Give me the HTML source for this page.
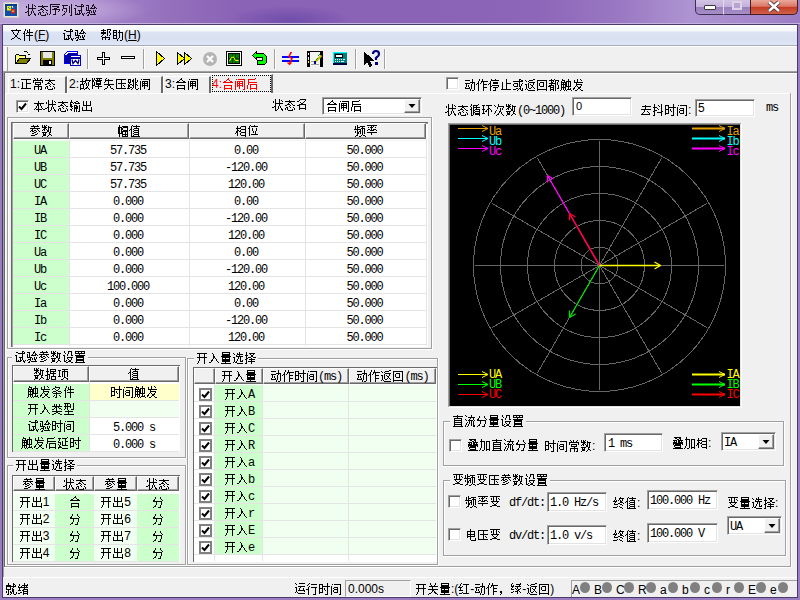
<!DOCTYPE html>
<html><head><meta charset="utf-8">
<style>
*{margin:0;padding:0;box-sizing:border-box}
html,body{width:800px;height:600px;overflow:hidden}
body{position:relative;background:#9a7cc0;font-family:"Liberation Sans",sans-serif;font-size:12px;color:#000;line-height:13px}
.a{position:absolute}
.m{font-family:"Liberation Mono",monospace;font-size:12px;letter-spacing:-1.2px}
.t{white-space:nowrap}
svg{overflow:visible}
.g{display:inline-block;width:12px;height:13px;vertical-align:top;fill:currentColor}
</style></head><body>
<svg width="0" height="0" style="position:absolute"><defs><path id="g0" d="M3 0h1v1h-1zM7 0h1v1h-1zM3 1h1v1h-1zM7 1h1v1h-1zM9 1h1v1h-1zM1 2h1v1h-1zM3 2h1v1h-1zM7 2h1v1h-1zM10 2h1v1h-1zM1 3h1v1h-1zM3 3h1v1h-1zM7 3h1v1h-1zM3 4h8v1h-8zM3 5h1v1h-1zM7 5h1v1h-1zM3 6h1v1h-1zM7 6h1v1h-1zM2 7h2v1h-2zM6 7h1v1h-1zM8 7h1v1h-1zM0 8h2v1h-2zM3 8h1v1h-1zM6 8h1v1h-1zM8 8h1v1h-1zM3 9h1v1h-1zM6 9h1v1h-1zM9 9h1v1h-1zM3 10h1v1h-1zM5 10h1v1h-1zM9 10h2v1h-2zM3 11h2v1h-2zM10 11h1v1h-1z" shape-rendering="crispEdges"/><path id="g1" d="M5 1h1v1h-1zM1 2h10v1h-10zM5 3h2v1h-2zM4 4h1v1h-1zM7 4h1v1h-1zM3 5h3v1h-3zM8 5h1v1h-1zM1 6h2v1h-2zM6 6h1v1h-1zM9 6h2v1h-2zM5 7h1v1h-1zM2 8h2v1h-2zM6 8h1v1h-1zM9 8h1v1h-1zM1 9h1v1h-1zM3 9h1v1h-1zM10 9h1v1h-1zM1 10h1v1h-1zM3 10h1v1h-1zM8 10h1v1h-1zM10 10h1v1h-1zM4 11h5v1h-5z" shape-rendering="crispEdges"/><path id="g2" d="M1 0h10v1h-10zM1 1h1v1h-1zM1 2h1v1h-1zM3 2h7v1h-7zM1 3h1v1h-1zM8 3h2v1h-2zM1 4h1v1h-1zM5 4h3v1h-3zM1 5h1v1h-1zM3 5h8v1h-8zM1 6h1v1h-1zM6 6h1v1h-1zM10 6h1v1h-1zM1 7h1v1h-1zM6 7h1v1h-1zM9 7h1v1h-1zM1 8h1v1h-1zM6 8h1v1h-1zM1 9h1v1h-1zM6 9h1v1h-1zM0 10h1v1h-1zM4 10h3v1h-3z" shape-rendering="crispEdges"/><path id="g3" d="M10 0h1v1h-1zM1 1h6v1h-6zM10 1h1v1h-1zM2 2h1v1h-1zM8 2h1v1h-1zM10 2h1v1h-1zM2 3h1v1h-1zM8 3h1v1h-1zM10 3h1v1h-1zM2 4h4v1h-4zM8 4h1v1h-1zM10 4h1v1h-1zM1 5h1v1h-1zM5 5h1v1h-1zM8 5h1v1h-1zM10 5h1v1h-1zM1 6h1v1h-1zM5 6h1v1h-1zM8 6h1v1h-1zM10 6h1v1h-1zM3 7h1v1h-1zM5 7h1v1h-1zM8 7h1v1h-1zM10 7h1v1h-1zM4 8h1v1h-1zM8 8h1v1h-1zM10 8h1v1h-1zM3 9h1v1h-1zM10 9h1v1h-1zM2 10h2v1h-2zM10 10h1v1h-1zM1 11h1v1h-1zM9 11h2v1h-2z" shape-rendering="crispEdges"/><path id="g4" d="M8 0h2v1h-2zM2 1h2v1h-2zM8 1h1v1h-1zM10 1h1v1h-1zM4 2h7v1h-7zM8 3h1v1h-1zM1 4h2v1h-2zM8 4h1v1h-1zM2 5h1v1h-1zM8 5h1v1h-1zM2 6h1v1h-1zM5 6h4v1h-4zM2 7h1v1h-1zM6 7h1v1h-1zM8 7h1v1h-1zM2 8h1v1h-1zM6 8h1v1h-1zM8 8h1v1h-1zM2 9h1v1h-1zM4 9h1v1h-1zM6 9h2v1h-2zM9 9h1v1h-1zM11 9h1v1h-1zM2 10h5v1h-5zM9 10h2v1h-2zM10 11h1v1h-1z" shape-rendering="crispEdges"/><path id="g5" d="M8 0h1v1h-1zM1 1h3v1h-3zM7 1h2v1h-2zM3 2h1v1h-1zM7 2h1v1h-1zM9 2h1v1h-1zM1 3h1v1h-1zM3 3h1v1h-1zM6 3h1v1h-1zM9 3h2v1h-2zM1 4h1v1h-1zM3 4h1v1h-1zM5 4h5v1h-5zM11 4h1v1h-1zM1 5h1v1h-1zM3 5h1v1h-1zM1 6h5v1h-5zM8 6h1v1h-1zM10 6h1v1h-1zM4 7h1v1h-1zM6 7h1v1h-1zM8 7h1v1h-1zM10 7h1v1h-1zM2 8h3v1h-3zM6 8h1v1h-1zM8 8h2v1h-2zM1 9h1v1h-1zM4 9h1v1h-1zM9 9h1v1h-1zM3 10h1v1h-1zM5 10h6v1h-6zM2 11h2v1h-2z" shape-rendering="crispEdges"/><path id="g6" d="M6 0h1v1h-1zM1 1h10v1h-10zM2 2h1v1h-1zM8 2h1v1h-1zM3 3h1v1h-1zM8 3h1v1h-1zM3 4h1v1h-1zM7 4h1v1h-1zM4 5h1v1h-1zM7 5h1v1h-1zM5 6h2v1h-2zM5 7h2v1h-2zM4 8h1v1h-1zM7 8h1v1h-1zM2 9h2v1h-2zM8 9h2v1h-2zM1 10h1v1h-1zM10 10h1v1h-1z" shape-rendering="crispEdges"/><path id="g7" d="M3 0h1v1h-1zM7 0h1v1h-1zM3 1h1v1h-1zM5 1h1v1h-1zM7 1h1v1h-1zM2 2h1v1h-1zM5 2h1v1h-1zM7 2h1v1h-1zM2 3h1v1h-1zM5 3h6v1h-6zM1 4h2v1h-2zM4 4h1v1h-1zM7 4h1v1h-1zM2 5h1v1h-1zM7 5h1v1h-1zM2 6h1v1h-1zM4 6h7v1h-7zM2 7h1v1h-1zM7 7h1v1h-1zM2 8h1v1h-1zM7 8h1v1h-1zM2 9h1v1h-1zM7 9h1v1h-1zM2 10h1v1h-1zM7 10h1v1h-1zM2 11h1v1h-1zM7 11h1v1h-1z" shape-rendering="crispEdges"/><path id="g8" d="M3 0h1v1h-1zM7 0h4v1h-4zM1 1h5v1h-5zM7 1h1v1h-1zM10 1h1v1h-1zM3 2h1v1h-1zM7 2h1v1h-1zM9 2h1v1h-1zM1 3h5v1h-5zM7 3h1v1h-1zM9 3h1v1h-1zM1 4h5v1h-5zM7 4h1v1h-1zM10 4h1v1h-1zM3 5h1v1h-1zM7 5h1v1h-1zM10 5h1v1h-1zM2 6h1v1h-1zM7 6h1v1h-1zM9 6h1v1h-1zM1 7h1v1h-1zM5 7h1v1h-1zM2 8h8v1h-8zM2 9h1v1h-1zM5 9h1v1h-1zM9 9h1v1h-1zM2 10h1v1h-1zM5 10h1v1h-1zM8 10h2v1h-2z" shape-rendering="crispEdges"/><path id="g9" d="M1 1h4v1h-4zM7 1h1v1h-1zM1 2h1v1h-1zM4 2h1v1h-1zM7 2h1v1h-1zM1 3h4v1h-4zM6 3h5v1h-5zM1 4h1v1h-1zM4 4h1v1h-1zM7 4h1v1h-1zM10 4h1v1h-1zM1 5h1v1h-1zM4 5h1v1h-1zM7 5h1v1h-1zM10 5h1v1h-1zM1 6h4v1h-4zM7 6h1v1h-1zM10 6h1v1h-1zM1 7h1v1h-1zM4 7h1v1h-1zM7 7h1v1h-1zM10 7h1v1h-1zM1 8h1v1h-1zM4 8h1v1h-1zM7 8h1v1h-1zM10 8h1v1h-1zM1 9h4v1h-4zM6 9h1v1h-1zM10 9h1v1h-1zM5 10h1v1h-1zM10 10h1v1h-1zM5 11h1v1h-1zM8 11h2v1h-2z" shape-rendering="crispEdges"/><path id="g10" d="M1 1h10v1h-10zM6 2h1v1h-1zM6 3h1v1h-1zM2 4h1v1h-1zM6 4h1v1h-1zM2 5h1v1h-1zM6 5h5v1h-5zM2 6h1v1h-1zM6 6h1v1h-1zM2 7h1v1h-1zM6 7h1v1h-1zM2 8h1v1h-1zM6 8h1v1h-1zM2 9h1v1h-1zM6 9h1v1h-1zM1 10h10v1h-10z" shape-rendering="crispEdges"/><path id="g11" d="M2 0h1v1h-1zM5 0h1v1h-1zM9 0h1v1h-1zM3 1h1v1h-1zM5 1h1v1h-1zM8 1h1v1h-1zM1 2h10v1h-10zM1 3h1v1h-1zM10 3h1v1h-1zM1 4h1v1h-1zM3 4h6v1h-6zM10 4h1v1h-1zM3 5h1v1h-1zM8 5h1v1h-1zM3 6h6v1h-6zM6 7h1v1h-1zM2 8h8v1h-8zM2 9h1v1h-1zM6 9h1v1h-1zM9 9h1v1h-1zM2 10h1v1h-1zM6 10h1v1h-1zM9 10h1v1h-1zM2 11h1v1h-1zM6 11h1v1h-1zM8 11h2v1h-2z" shape-rendering="crispEdges"/><path id="g12" d="M3 0h1v1h-1zM7 0h1v1h-1zM3 1h1v1h-1zM7 1h1v1h-1zM3 2h1v1h-1zM6 2h6v1h-6zM1 3h6v1h-6zM10 3h1v1h-1zM3 4h1v1h-1zM6 4h1v1h-1zM9 4h1v1h-1zM3 5h1v1h-1zM5 5h1v1h-1zM7 5h1v1h-1zM9 5h1v1h-1zM1 6h4v1h-4zM7 6h1v1h-1zM9 6h1v1h-1zM1 7h1v1h-1zM4 7h1v1h-1zM7 7h1v1h-1zM9 7h1v1h-1zM1 8h1v1h-1zM4 8h1v1h-1zM8 8h1v1h-1zM1 9h1v1h-1zM4 9h1v1h-1zM7 9h2v1h-2zM1 10h4v1h-4zM6 10h2v1h-2zM9 10h1v1h-1zM1 11h1v1h-1zM5 11h1v1h-1zM10 11h1v1h-1z" shape-rendering="crispEdges"/><path id="g13" d="M1 0h1v1h-1zM3 0h1v1h-1zM5 0h6v1h-6zM1 1h1v1h-1zM3 1h1v1h-1zM6 1h1v1h-1zM8 1h1v1h-1zM1 2h2v1h-2zM4 2h7v1h-7zM1 3h2v1h-2zM5 3h5v1h-5zM1 4h1v1h-1zM3 4h1v1h-1zM5 4h1v1h-1zM9 4h1v1h-1zM1 5h1v1h-1zM3 5h1v1h-1zM5 5h5v1h-5zM1 6h1v1h-1zM3 6h1v1h-1zM5 6h5v1h-5zM1 7h3v1h-3zM7 7h1v1h-1zM1 8h1v1h-1zM4 8h7v1h-7zM1 9h1v1h-1zM7 9h1v1h-1zM1 10h1v1h-1zM7 10h1v1h-1z" shape-rendering="crispEdges"/><path id="g14" d="M3 0h1v1h-1zM2 1h1v1h-1zM5 1h1v1h-1zM2 2h8v1h-8zM2 3h1v1h-1zM5 3h1v1h-1zM1 4h1v1h-1zM5 4h1v1h-1zM5 5h1v1h-1zM1 6h10v1h-10zM5 7h2v1h-2zM4 8h1v1h-1zM7 8h1v1h-1zM4 9h1v1h-1zM7 9h1v1h-1zM2 10h2v1h-2zM8 10h2v1h-2zM1 11h1v1h-1zM10 11h1v1h-1z" shape-rendering="crispEdges"/><path id="g15" d="M1 1h10v1h-10zM1 2h1v1h-1zM6 2h1v1h-1zM1 3h1v1h-1zM6 3h1v1h-1zM1 4h1v1h-1zM6 4h1v1h-1zM1 5h1v1h-1zM3 5h8v1h-8zM1 6h1v1h-1zM6 6h1v1h-1zM1 7h1v1h-1zM6 7h1v1h-1zM8 7h1v1h-1zM1 8h1v1h-1zM6 8h1v1h-1zM9 8h1v1h-1zM1 9h1v1h-1zM6 9h1v1h-1zM1 10h10v1h-10z" shape-rendering="crispEdges"/><path id="g16" d="M8 0h1v1h-1zM1 1h3v1h-3zM6 1h1v1h-1zM8 1h1v1h-1zM1 2h1v1h-1zM3 2h1v1h-1zM5 2h2v1h-2zM8 2h1v1h-1zM10 2h1v1h-1zM1 3h1v1h-1zM3 3h1v1h-1zM5 3h2v1h-2zM8 3h1v1h-1zM10 3h1v1h-1zM1 4h3v1h-3zM6 4h1v1h-1zM8 4h2v1h-2zM2 5h1v1h-1zM6 5h1v1h-1zM8 5h1v1h-1zM1 6h1v1h-1zM3 6h2v1h-2zM6 6h1v1h-1zM8 6h2v1h-2zM1 7h2v1h-2zM5 7h2v1h-2zM8 7h1v1h-1zM10 7h1v1h-1zM1 8h2v1h-2zM6 8h1v1h-1zM8 8h1v1h-1zM1 9h1v1h-1zM3 9h2v1h-2zM6 9h1v1h-1zM8 9h1v1h-1zM0 10h3v1h-3zM5 10h1v1h-1zM8 10h1v1h-1zM11 10h1v1h-1zM4 11h1v1h-1zM9 11h2v1h-2z" shape-rendering="crispEdges"/><path id="g17" d="M2 1h1v1h-1zM4 1h7v1h-7zM10 2h1v1h-1zM1 3h1v1h-1zM3 3h6v1h-6zM10 3h1v1h-1zM1 4h1v1h-1zM3 4h1v1h-1zM5 4h1v1h-1zM8 4h1v1h-1zM10 4h1v1h-1zM1 5h1v1h-1zM3 5h6v1h-6zM10 5h1v1h-1zM1 6h1v1h-1zM3 6h1v1h-1zM5 6h1v1h-1zM8 6h1v1h-1zM10 6h1v1h-1zM1 7h1v1h-1zM3 7h6v1h-6zM10 7h1v1h-1zM1 8h1v1h-1zM3 8h1v1h-1zM5 8h1v1h-1zM8 8h1v1h-1zM10 8h1v1h-1zM1 9h1v1h-1zM5 9h1v1h-1zM10 9h1v1h-1zM1 10h1v1h-1zM5 10h1v1h-1zM10 10h1v1h-1zM1 11h1v1h-1zM9 11h2v1h-2z" shape-rendering="crispEdges"/><path id="g18" d="M6 0h1v1h-1zM5 1h2v1h-2zM4 2h1v1h-1zM7 2h1v1h-1zM2 3h2v1h-2zM8 3h2v1h-2zM1 4h10v1h-10zM2 7h8v1h-8zM2 8h1v1h-1zM9 8h1v1h-1zM2 9h1v1h-1zM9 9h1v1h-1zM2 10h8v1h-8zM2 11h1v1h-1zM9 11h1v1h-1z" shape-rendering="crispEdges"/><path id="g19" d="M9 0h1v1h-1zM2 1h7v1h-7zM2 2h1v1h-1zM2 3h1v1h-1zM2 4h9v1h-9zM2 5h1v1h-1zM2 6h1v1h-1zM4 6h7v1h-7zM1 7h1v1h-1zM4 7h1v1h-1zM10 7h1v1h-1zM1 8h1v1h-1zM4 8h1v1h-1zM10 8h1v1h-1zM1 9h1v1h-1zM4 9h1v1h-1zM10 9h1v1h-1zM1 10h1v1h-1zM4 10h7v1h-7zM4 11h1v1h-1zM10 11h1v1h-1z" shape-rendering="crispEdges"/><path id="g20" d="M5 1h1v1h-1zM5 2h1v1h-1zM1 3h10v1h-10zM4 4h2v1h-2zM7 4h1v1h-1zM4 5h2v1h-2zM7 5h1v1h-1zM3 6h1v1h-1zM5 6h1v1h-1zM8 6h1v1h-1zM3 7h1v1h-1zM5 7h1v1h-1zM8 7h1v1h-1zM2 8h1v1h-1zM5 8h1v1h-1zM9 8h1v1h-1zM1 9h1v1h-1zM3 9h6v1h-6zM10 9h2v1h-2zM5 10h1v1h-1zM5 11h1v1h-1z" shape-rendering="crispEdges"/><path id="g21" d="M2 0h1v1h-1zM2 1h1v1h-1zM7 1h2v1h-2zM1 2h3v1h-3zM5 2h2v1h-2zM9 2h1v1h-1zM1 3h1v1h-1zM4 3h1v1h-1zM6 3h5v1h-5zM1 4h2v1h-2zM1 5h2v1h-2zM5 5h3v1h-3zM10 5h1v1h-1zM1 6h3v1h-3zM5 6h1v1h-1zM7 6h2v1h-2zM10 6h1v1h-1zM2 7h1v1h-1zM5 7h4v1h-4zM10 7h1v1h-1zM3 8h1v1h-1zM5 8h4v1h-4zM10 8h1v1h-1zM1 9h2v1h-2zM5 9h1v1h-1zM7 9h1v1h-1zM10 9h1v1h-1zM2 10h1v1h-1zM5 10h1v1h-1zM7 10h1v1h-1zM10 10h1v1h-1zM5 11h1v1h-1zM7 11h1v1h-1zM9 11h2v1h-2z" shape-rendering="crispEdges"/><path id="g22" d="M2 1h1v1h-1zM5 1h1v1h-1zM9 1h1v1h-1zM2 2h1v1h-1zM5 2h1v1h-1zM9 2h1v1h-1zM2 3h1v1h-1zM5 3h1v1h-1zM9 3h1v1h-1zM2 4h1v1h-1zM5 4h1v1h-1zM9 4h1v1h-1zM2 5h8v1h-8zM5 6h1v1h-1zM1 7h1v1h-1zM5 7h1v1h-1zM10 7h1v1h-1zM1 8h1v1h-1zM5 8h1v1h-1zM10 8h1v1h-1zM1 9h1v1h-1zM5 9h1v1h-1zM10 9h1v1h-1zM1 10h10v1h-10zM10 11h1v1h-1z" shape-rendering="crispEdges"/><path id="g23" d="M4 0h6v1h-6zM3 1h1v1h-1zM9 1h1v1h-1zM1 2h2v1h-2zM8 2h1v1h-1zM4 3h1v1h-1zM7 3h1v1h-1zM5 4h2v1h-2zM3 5h7v1h-7zM1 6h3v1h-3zM9 6h1v1h-1zM3 7h1v1h-1zM9 7h1v1h-1zM3 8h1v1h-1zM9 8h1v1h-1zM3 9h7v1h-7zM3 10h1v1h-1zM9 10h1v1h-1z" shape-rendering="crispEdges"/><path id="g24" d="M4 0h1v1h-1zM8 0h1v1h-1zM2 1h8v1h-8zM5 2h1v1h-1zM1 3h10v1h-10zM3 4h1v1h-1zM8 4h1v1h-1zM2 5h2v1h-2zM5 5h2v1h-2zM9 5h1v1h-1zM1 6h1v1h-1zM3 6h2v1h-2zM7 6h1v1h-1zM10 6h1v1h-1zM5 7h2v1h-2zM3 8h2v1h-2zM8 8h1v1h-1zM6 9h2v1h-2zM2 10h4v1h-4z" shape-rendering="crispEdges"/><path id="g25" d="M1 0h1v1h-1zM3 0h1v1h-1zM5 0h1v1h-1zM1 1h1v1h-1zM3 1h2v1h-2zM7 1h1v1h-1zM1 2h5v1h-5zM7 2h4v1h-4zM3 3h2v1h-2zM7 3h1v1h-1zM9 3h1v1h-1zM2 4h2v1h-2zM5 4h1v1h-1zM7 4h1v1h-1zM9 4h1v1h-1zM1 5h1v1h-1zM3 5h1v1h-1zM6 5h2v1h-2zM9 5h1v1h-1zM6 6h2v1h-2zM9 6h1v1h-1zM1 7h5v1h-5zM8 7h2v1h-2zM2 8h1v1h-1zM4 8h1v1h-1zM8 8h1v1h-1zM2 9h3v1h-3zM8 9h2v1h-2zM2 10h3v1h-3zM7 10h1v1h-1zM10 10h1v1h-1zM1 11h1v1h-1zM6 11h1v1h-1z" shape-rendering="crispEdges"/><path id="g26" d="M2 0h1v1h-1zM2 1h1v1h-1zM5 1h6v1h-6zM1 2h4v1h-4zM6 2h5v1h-5zM1 3h2v1h-2zM4 3h2v1h-2zM10 3h1v1h-1zM1 4h2v1h-2zM4 4h2v1h-2zM10 4h1v1h-1zM1 5h2v1h-2zM4 5h1v1h-1zM6 5h5v1h-5zM1 6h2v1h-2zM4 6h7v1h-7zM1 7h2v1h-2zM4 7h2v1h-2zM8 7h1v1h-1zM10 7h1v1h-1zM1 8h5v1h-5zM8 8h1v1h-1zM10 8h1v1h-1zM2 9h1v1h-1zM5 9h6v1h-6zM2 10h1v1h-1zM5 10h1v1h-1zM8 10h1v1h-1zM10 10h1v1h-1zM2 11h1v1h-1zM5 11h6v1h-6z" shape-rendering="crispEdges"/><path id="g27" d="M3 0h1v1h-1zM7 0h1v1h-1zM2 1h1v1h-1zM4 1h7v1h-7zM2 2h1v1h-1zM7 2h1v1h-1zM2 3h1v1h-1zM5 3h5v1h-5zM1 4h2v1h-2zM4 4h1v1h-1zM9 4h1v1h-1zM0 5h1v1h-1zM2 5h1v1h-1zM5 5h5v1h-5zM2 6h1v1h-1zM4 6h1v1h-1zM9 6h1v1h-1zM2 7h1v1h-1zM5 7h5v1h-5zM2 8h1v1h-1zM4 8h1v1h-1zM9 8h1v1h-1zM2 9h1v1h-1zM5 9h5v1h-5zM2 10h1v1h-1zM4 10h1v1h-1zM9 10h1v1h-1zM2 11h9v1h-9z" shape-rendering="crispEdges"/><path id="g28" d="M2 1h1v1h-1zM6 1h5v1h-5zM2 2h1v1h-1zM5 2h1v1h-1zM10 2h1v1h-1zM1 3h5v1h-5zM10 3h1v1h-1zM2 4h1v1h-1zM6 4h5v1h-5zM2 5h2v1h-2zM5 5h1v1h-1zM10 5h1v1h-1zM1 6h2v1h-2zM4 6h2v1h-2zM10 6h1v1h-1zM1 7h2v1h-2zM6 7h5v1h-5zM0 8h1v1h-1zM2 8h1v1h-1zM5 8h1v1h-1zM10 8h1v1h-1zM2 9h1v1h-1zM5 9h1v1h-1zM10 9h1v1h-1zM2 10h1v1h-1zM6 10h5v1h-5zM10 11h1v1h-1z" shape-rendering="crispEdges"/><path id="g29" d="M3 0h1v1h-1zM7 0h1v1h-1zM2 1h1v1h-1zM4 1h7v1h-7zM2 2h1v1h-1zM1 3h2v1h-2zM5 3h1v1h-1zM9 3h1v1h-1zM2 4h1v1h-1zM5 4h1v1h-1zM9 4h1v1h-1zM2 5h1v1h-1zM5 5h1v1h-1zM9 5h1v1h-1zM2 6h1v1h-1zM6 6h1v1h-1zM8 6h1v1h-1zM2 7h1v1h-1zM6 7h1v1h-1zM8 7h1v1h-1zM2 8h1v1h-1zM8 8h1v1h-1zM2 9h1v1h-1zM4 9h7v1h-7zM2 10h1v1h-1z" shape-rendering="crispEdges"/><path id="g30" d="M3 0h1v1h-1zM1 1h1v1h-1zM3 1h1v1h-1zM6 1h5v1h-5zM1 2h1v1h-1zM3 2h3v1h-3zM8 2h1v1h-1zM1 3h1v1h-1zM3 3h1v1h-1zM7 3h4v1h-4zM0 4h7v1h-7zM8 4h1v1h-1zM10 4h1v1h-1zM3 5h1v1h-1zM6 5h1v1h-1zM8 5h1v1h-1zM10 5h1v1h-1zM1 6h1v1h-1zM3 6h1v1h-1zM5 6h2v1h-2zM8 6h1v1h-1zM10 6h1v1h-1zM1 7h1v1h-1zM3 7h2v1h-2zM6 7h1v1h-1zM8 7h1v1h-1zM10 7h1v1h-1zM3 8h2v1h-2zM6 8h1v1h-1zM8 8h1v1h-1zM10 8h1v1h-1zM3 9h1v1h-1zM8 9h1v1h-1zM2 10h2v1h-2zM7 10h1v1h-1zM9 10h2v1h-2zM1 11h1v1h-1zM5 11h2v1h-2zM11 11h1v1h-1z" shape-rendering="crispEdges"/><path id="g31" d="M1 0h10v1h-10zM5 1h1v1h-1zM7 1h1v1h-1zM2 2h1v1h-1zM4 2h3v1h-3zM9 2h1v1h-1zM5 3h1v1h-1zM2 4h2v1h-2zM5 4h1v1h-1zM7 4h3v1h-3zM1 5h1v1h-1zM4 5h4v1h-4zM10 5h1v1h-1zM1 7h10v1h-10zM5 8h1v1h-1zM5 9h1v1h-1z" shape-rendering="crispEdges"/><path id="g32" d="M2 0h1v1h-1zM6 0h4v1h-4zM2 1h1v1h-1zM6 1h1v1h-1zM9 1h1v1h-1zM3 2h1v1h-1zM6 2h1v1h-1zM9 2h1v1h-1zM5 3h1v1h-1zM9 3h1v1h-1zM1 4h2v1h-2zM5 4h1v1h-1zM9 4h2v1h-2zM2 5h1v1h-1zM2 6h1v1h-1zM5 6h6v1h-6zM2 7h1v1h-1zM5 7h1v1h-1zM9 7h1v1h-1zM2 8h1v1h-1zM6 8h1v1h-1zM9 8h1v1h-1zM2 9h1v1h-1zM4 9h1v1h-1zM7 9h2v1h-2zM2 10h2v1h-2zM6 10h3v1h-3zM4 11h2v1h-2zM9 11h2v1h-2z" shape-rendering="crispEdges"/><path id="g33" d="M1 0h10v1h-10zM1 1h1v1h-1zM4 1h1v1h-1zM7 1h1v1h-1zM10 1h1v1h-1zM1 2h10v1h-10zM5 3h1v1h-1zM1 4h10v1h-10zM2 5h8v1h-8zM2 6h8v1h-8zM2 7h1v1h-1zM9 7h1v1h-1zM2 8h8v1h-8zM2 9h8v1h-8zM2 10h1v1h-1zM9 10h1v1h-1zM1 11h10v1h-10z" shape-rendering="crispEdges"/><path id="g34" d="M2 0h1v1h-1zM2 1h1v1h-1zM5 1h6v1h-6zM2 2h1v1h-1zM5 2h1v1h-1zM10 2h1v1h-1zM1 3h3v1h-3zM5 3h6v1h-6zM2 4h1v1h-1zM5 4h1v1h-1zM8 4h1v1h-1zM2 5h1v1h-1zM5 5h6v1h-6zM2 6h3v1h-3zM8 6h1v1h-1zM0 7h3v1h-3zM4 7h1v1h-1zM8 7h1v1h-1zM2 8h1v1h-1zM4 8h1v1h-1zM6 8h5v1h-5zM2 9h1v1h-1zM4 9h1v1h-1zM6 9h1v1h-1zM10 9h1v1h-1zM2 10h1v1h-1zM4 10h1v1h-1zM6 10h1v1h-1zM10 10h1v1h-1zM1 11h3v1h-3zM6 11h5v1h-5z" shape-rendering="crispEdges"/><path id="g35" d="M5 1h6v1h-6zM1 2h3v1h-3zM7 2h1v1h-1zM2 3h1v1h-1zM5 3h6v1h-6zM2 4h1v1h-1zM5 4h1v1h-1zM7 4h1v1h-1zM10 4h1v1h-1zM2 5h1v1h-1zM5 5h1v1h-1zM7 5h1v1h-1zM10 5h1v1h-1zM2 6h1v1h-1zM5 6h1v1h-1zM7 6h1v1h-1zM10 6h1v1h-1zM2 7h1v1h-1zM5 7h1v1h-1zM7 7h1v1h-1zM10 7h1v1h-1zM1 8h3v1h-3zM5 8h1v1h-1zM7 8h1v1h-1zM10 8h1v1h-1zM7 9h2v1h-2zM6 10h1v1h-1zM9 10h2v1h-2zM4 11h2v1h-2zM10 11h1v1h-1z" shape-rendering="crispEdges"/><path id="g36" d="M2 0h1v1h-1zM8 0h1v1h-1zM2 1h3v1h-3zM8 1h1v1h-1zM1 2h1v1h-1zM4 2h1v1h-1zM6 2h5v1h-5zM1 3h6v1h-6zM8 3h1v1h-1zM10 3h1v1h-1zM1 4h1v1h-1zM3 4h1v1h-1zM5 4h2v1h-2zM8 4h1v1h-1zM10 4h1v1h-1zM1 5h6v1h-6zM8 5h1v1h-1zM10 5h1v1h-1zM1 6h1v1h-1zM3 6h1v1h-1zM5 6h2v1h-2zM8 6h1v1h-1zM10 6h1v1h-1zM1 7h1v1h-1zM3 7h1v1h-1zM5 7h6v1h-6zM1 8h5v1h-5zM8 8h1v1h-1zM1 9h1v1h-1zM3 9h1v1h-1zM5 9h1v1h-1zM8 9h1v1h-1zM10 9h1v1h-1zM1 10h1v1h-1zM3 10h1v1h-1zM5 10h1v1h-1zM7 10h4v1h-4zM0 11h1v1h-1zM4 11h1v1h-1zM6 11h1v1h-1zM11 11h1v1h-1z" shape-rendering="crispEdges"/><path id="g37" d="M5 0h1v1h-1zM8 0h1v1h-1zM2 1h1v1h-1zM5 1h1v1h-1zM9 1h1v1h-1zM2 2h1v1h-1zM5 2h1v1h-1zM2 3h9v1h-9zM4 4h1v1h-1zM4 5h6v1h-6zM4 6h1v1h-1zM9 6h1v1h-1zM3 7h1v1h-1zM5 7h1v1h-1zM8 7h1v1h-1zM2 8h1v1h-1zM6 8h3v1h-3zM1 9h2v1h-2zM6 9h2v1h-2zM1 10h1v1h-1zM5 10h1v1h-1zM8 10h1v1h-1zM3 11h2v1h-2zM9 11h2v1h-2z" shape-rendering="crispEdges"/><path id="g38" d="M4 0h1v1h-1zM4 1h5v1h-5zM2 2h2v1h-2zM8 2h1v1h-1zM1 3h1v1h-1zM4 3h1v1h-1zM7 3h1v1h-1zM5 4h2v1h-2zM2 5h3v1h-3zM7 5h3v1h-3zM1 6h1v1h-1zM5 6h1v1h-1zM10 6h1v1h-1zM2 7h8v1h-8zM5 8h1v1h-1zM3 9h1v1h-1zM5 9h1v1h-1zM8 9h1v1h-1zM2 10h1v1h-1zM5 10h1v1h-1zM9 10h1v1h-1zM4 11h2v1h-2z" shape-rendering="crispEdges"/><path id="g39" d="M9 0h1v1h-1zM1 1h4v1h-4zM9 1h1v1h-1zM1 2h1v1h-1zM4 2h1v1h-1zM9 2h1v1h-1zM1 3h1v1h-1zM4 3h8v1h-8zM1 4h1v1h-1zM4 4h1v1h-1zM9 4h1v1h-1zM1 5h4v1h-4zM6 5h1v1h-1zM9 5h1v1h-1zM1 6h1v1h-1zM4 6h1v1h-1zM6 6h1v1h-1zM9 6h1v1h-1zM1 7h1v1h-1zM4 7h1v1h-1zM7 7h1v1h-1zM9 7h1v1h-1zM1 8h1v1h-1zM4 8h1v1h-1zM9 8h1v1h-1zM1 9h4v1h-4zM9 9h1v1h-1zM1 10h1v1h-1zM9 10h1v1h-1zM7 11h3v1h-3z" shape-rendering="crispEdges"/><path id="g40" d="M2 1h1v1h-1zM4 1h7v1h-7zM10 2h1v1h-1zM1 3h1v1h-1zM10 3h1v1h-1zM1 4h1v1h-1zM4 4h4v1h-4zM10 4h1v1h-1zM1 5h1v1h-1zM3 5h1v1h-1zM7 5h1v1h-1zM10 5h1v1h-1zM1 6h1v1h-1zM4 6h4v1h-4zM10 6h1v1h-1zM1 7h1v1h-1zM3 7h1v1h-1zM7 7h1v1h-1zM10 7h1v1h-1zM1 8h1v1h-1zM3 8h1v1h-1zM7 8h1v1h-1zM10 8h1v1h-1zM1 9h1v1h-1zM4 9h4v1h-4zM10 9h1v1h-1zM1 10h1v1h-1zM10 10h1v1h-1zM1 11h1v1h-1zM9 11h2v1h-2z" shape-rendering="crispEdges"/><path id="g41" d="M1 1h10v1h-10zM3 2h1v1h-1zM8 2h1v1h-1zM3 3h1v1h-1zM8 3h1v1h-1zM3 4h1v1h-1zM8 4h1v1h-1zM1 5h10v1h-10zM3 6h1v1h-1zM8 6h1v1h-1zM3 7h1v1h-1zM8 7h1v1h-1zM3 8h1v1h-1zM8 8h1v1h-1zM2 9h1v1h-1zM8 9h1v1h-1zM2 10h1v1h-1zM8 10h1v1h-1zM1 11h1v1h-1zM8 11h1v1h-1z" shape-rendering="crispEdges"/><path id="g42" d="M4 1h1v1h-1zM5 2h1v1h-1zM5 3h1v1h-1zM5 4h2v1h-2zM5 5h2v1h-2zM5 6h1v1h-1zM7 6h1v1h-1zM4 7h1v1h-1zM8 7h1v1h-1zM3 8h2v1h-2zM8 8h1v1h-1zM3 9h1v1h-1zM9 9h1v1h-1zM1 10h2v1h-2zM10 10h1v1h-1z" shape-rendering="crispEdges"/><path id="g43" d="M3 1h1v1h-1zM5 1h1v1h-1zM8 1h1v1h-1zM3 2h1v1h-1zM5 2h1v1h-1zM8 2h1v1h-1zM1 3h10v1h-10zM4 4h2v1h-2zM7 4h1v1h-1zM3 5h1v1h-1zM5 5h1v1h-1zM8 5h2v1h-2zM1 6h2v1h-2zM5 6h1v1h-1zM10 6h1v1h-1zM5 7h1v1h-1zM1 8h10v1h-10zM5 9h2v1h-2zM3 10h2v1h-2zM7 10h2v1h-2zM1 11h2v1h-2zM9 11h2v1h-2z" shape-rendering="crispEdges"/><path id="g44" d="M1 0h6v1h-6zM10 0h1v1h-1zM2 1h1v1h-1zM4 1h1v1h-1zM7 1h1v1h-1zM10 1h1v1h-1zM2 2h1v1h-1zM4 2h1v1h-1zM7 2h1v1h-1zM10 2h1v1h-1zM1 3h7v1h-7zM10 3h1v1h-1zM2 4h1v1h-1zM4 4h1v1h-1zM7 4h1v1h-1zM10 4h1v1h-1zM2 5h1v1h-1zM4 5h1v1h-1zM10 5h1v1h-1zM1 6h1v1h-1zM4 6h1v1h-1zM8 6h3v1h-3zM5 7h1v1h-1zM2 8h8v1h-8zM5 9h1v1h-1zM5 10h1v1h-1zM1 11h10v1h-10z" shape-rendering="crispEdges"/><path id="g45" d="M10 0h1v1h-1zM1 1h3v1h-3zM5 1h5v1h-5zM2 2h1v1h-1zM8 2h1v1h-1zM2 3h1v1h-1zM8 3h1v1h-1zM1 4h1v1h-1zM5 4h1v1h-1zM8 4h3v1h-3zM1 5h3v1h-3zM5 5h1v1h-1zM8 5h1v1h-1zM3 6h1v1h-1zM5 6h1v1h-1zM8 6h1v1h-1zM1 7h1v1h-1zM3 7h1v1h-1zM5 7h1v1h-1zM8 7h1v1h-1zM2 8h1v1h-1zM5 8h6v1h-6zM2 9h2v1h-2zM1 10h4v1h-4zM1 11h1v1h-1zM5 11h6v1h-6z" shape-rendering="crispEdges"/><path id="g46" d="M2 0h8v1h-8zM2 1h1v1h-1zM9 1h1v1h-1zM2 2h8v1h-8zM2 3h8v1h-8zM1 4h10v1h-10zM2 5h8v1h-8zM2 6h1v1h-1zM5 6h1v1h-1zM9 6h1v1h-1zM2 7h8v1h-8zM2 8h8v1h-8zM2 9h8v1h-8zM5 10h1v1h-1zM1 11h10v1h-10z" shape-rendering="crispEdges"/><path id="g47" d="M7 0h1v1h-1zM1 1h1v1h-1zM5 1h1v1h-1zM7 1h1v1h-1zM2 2h1v1h-1zM5 2h6v1h-6zM4 3h1v1h-1zM7 3h1v1h-1zM4 4h7v1h-7zM1 5h2v1h-2zM6 5h1v1h-1zM8 5h1v1h-1zM2 6h1v1h-1zM6 6h1v1h-1zM8 6h1v1h-1zM2 7h1v1h-1zM5 7h1v1h-1zM8 7h1v1h-1zM2 8h1v1h-1zM5 8h1v1h-1zM8 8h1v1h-1zM10 8h1v1h-1zM2 9h1v1h-1zM4 9h1v1h-1zM8 9h3v1h-3zM1 10h1v1h-1zM3 10h2v1h-2zM5 11h6v1h-6z" shape-rendering="crispEdges"/><path id="g48" d="M2 0h1v1h-1zM2 1h1v1h-1zM5 1h6v1h-6zM2 2h1v1h-1zM6 2h1v1h-1zM9 2h1v1h-1zM1 3h3v1h-3zM7 3h2v1h-2zM2 4h1v1h-1zM7 4h2v1h-2zM2 5h1v1h-1zM4 5h3v1h-3zM9 5h3v1h-3zM2 6h2v1h-2zM7 6h1v1h-1zM1 7h2v1h-2zM5 7h6v1h-6zM2 8h1v1h-1zM7 8h1v1h-1zM2 9h1v1h-1zM4 9h7v1h-7zM2 10h1v1h-1zM7 10h1v1h-1zM1 11h2v1h-2zM7 11h1v1h-1z" shape-rendering="crispEdges"/><path id="g49" d="M3 1h1v1h-1zM8 1h1v1h-1zM3 2h1v1h-1zM8 2h1v1h-1zM2 3h1v1h-1zM9 3h1v1h-1zM1 4h2v1h-2zM10 4h1v1h-1zM1 5h9v1h-9zM4 6h1v1h-1zM9 6h1v1h-1zM4 7h1v1h-1zM9 7h1v1h-1zM4 8h1v1h-1zM9 8h1v1h-1zM3 9h1v1h-1zM8 9h1v1h-1zM2 10h2v1h-2zM8 10h1v1h-1zM1 11h1v1h-1zM6 11h3v1h-3z" shape-rendering="crispEdges"/><path id="g50" d="M8 0h1v1h-1zM1 1h5v1h-5zM8 1h1v1h-1zM8 2h1v1h-1zM6 3h5v1h-5zM1 4h5v1h-5zM8 4h1v1h-1zM10 4h1v1h-1zM2 5h1v1h-1zM7 5h1v1h-1zM10 5h1v1h-1zM2 6h1v1h-1zM4 6h1v1h-1zM7 6h1v1h-1zM10 6h1v1h-1zM2 7h1v1h-1zM4 7h1v1h-1zM7 7h1v1h-1zM10 7h1v1h-1zM1 8h1v1h-1zM5 8h1v1h-1zM7 8h1v1h-1zM10 8h1v1h-1zM1 9h5v1h-5zM7 9h1v1h-1zM10 9h1v1h-1zM6 10h1v1h-1zM10 10h1v1h-1zM6 11h1v1h-1zM8 11h2v1h-2z" shape-rendering="crispEdges"/><path id="g51" d="M3 0h1v1h-1zM6 0h1v1h-1zM3 1h1v1h-1zM6 1h1v1h-1zM2 2h1v1h-1zM5 2h7v1h-7zM2 3h1v1h-1zM5 3h1v1h-1zM7 3h1v1h-1zM1 4h2v1h-2zM4 4h1v1h-1zM7 4h1v1h-1zM0 5h1v1h-1zM2 5h1v1h-1zM7 5h4v1h-4zM2 6h1v1h-1zM7 6h1v1h-1zM2 7h1v1h-1zM7 7h1v1h-1zM2 8h1v1h-1zM7 8h4v1h-4zM2 9h1v1h-1zM7 9h1v1h-1zM2 10h1v1h-1zM7 10h1v1h-1zM2 11h1v1h-1zM7 11h1v1h-1z" shape-rendering="crispEdges"/><path id="g52" d="M9 0h2v1h-2zM1 1h1v1h-1zM5 1h4v1h-4zM2 2h1v1h-1zM4 2h1v1h-1zM5 3h6v1h-6zM4 4h1v1h-1zM9 4h1v1h-1zM1 5h2v1h-2zM4 5h1v1h-1zM6 5h1v1h-1zM9 5h1v1h-1zM2 6h1v1h-1zM4 6h1v1h-1zM7 6h2v1h-2zM2 7h1v1h-1zM4 7h1v1h-1zM8 7h1v1h-1zM2 8h1v1h-1zM4 8h1v1h-1zM7 8h1v1h-1zM9 8h1v1h-1zM2 9h1v1h-1zM5 9h2v1h-2zM10 9h1v1h-1zM1 10h1v1h-1zM3 10h1v1h-1zM4 11h7v1h-7z" shape-rendering="crispEdges"/><path id="g53" d="M1 1h10v1h-10zM1 2h1v1h-1zM10 2h1v1h-1zM1 3h1v1h-1zM4 3h4v1h-4zM10 3h1v1h-1zM1 4h1v1h-1zM3 4h1v1h-1zM7 4h1v1h-1zM10 4h1v1h-1zM1 5h1v1h-1zM3 5h1v1h-1zM7 5h1v1h-1zM10 5h1v1h-1zM1 6h1v1h-1zM3 6h1v1h-1zM7 6h1v1h-1zM10 6h1v1h-1zM1 7h1v1h-1zM4 7h4v1h-4zM10 7h1v1h-1zM1 8h1v1h-1zM10 8h1v1h-1zM1 9h1v1h-1zM10 9h1v1h-1zM1 10h10v1h-10zM1 11h1v1h-1zM10 11h1v1h-1z" shape-rendering="crispEdges"/><path id="g54" d="M3 0h1v1h-1zM7 0h1v1h-1zM3 1h8v1h-8zM2 2h1v1h-1zM2 3h1v1h-1zM5 3h5v1h-5zM1 4h2v1h-2zM5 4h5v1h-5zM0 5h1v1h-1zM2 5h1v1h-1zM2 6h1v1h-1zM4 6h7v1h-7zM2 7h2v1h-2zM10 7h1v1h-1zM2 8h1v1h-1zM5 8h5v1h-5zM2 9h1v1h-1zM7 9h1v1h-1zM2 10h1v1h-1zM7 10h1v1h-1zM2 11h1v1h-1zM5 11h3v1h-3z" shape-rendering="crispEdges"/><path id="g55" d="M6 0h1v1h-1zM6 1h1v1h-1zM6 2h1v1h-1zM2 3h1v1h-1zM6 3h1v1h-1zM2 4h1v1h-1zM6 4h5v1h-5zM2 5h1v1h-1zM6 5h1v1h-1zM2 6h1v1h-1zM6 6h1v1h-1zM2 7h1v1h-1zM6 7h1v1h-1zM2 8h1v1h-1zM6 8h1v1h-1zM2 9h1v1h-1zM6 9h1v1h-1zM1 10h10v1h-10z" shape-rendering="crispEdges"/><path id="g56" d="M7 0h2v1h-2zM7 1h1v1h-1zM9 1h2v1h-2zM1 2h10v1h-10zM7 3h1v1h-1zM2 4h4v1h-4zM7 4h1v1h-1zM10 4h1v1h-1zM1 5h1v1h-1zM5 5h1v1h-1zM7 5h1v1h-1zM9 5h1v1h-1zM1 6h1v1h-1zM5 6h1v1h-1zM7 6h1v1h-1zM9 6h1v1h-1zM2 7h4v1h-4zM7 7h2v1h-2zM8 8h1v1h-1zM4 9h2v1h-2zM7 9h2v1h-2zM10 9h1v1h-1zM1 10h3v1h-3zM6 10h1v1h-1zM8 10h1v1h-1zM10 10h1v1h-1zM5 11h1v1h-1zM9 11h2v1h-2z" shape-rendering="crispEdges"/><path id="g57" d="M3 0h1v1h-1zM6 0h1v1h-1zM1 1h5v1h-5zM7 1h4v1h-4zM3 2h1v1h-1zM5 2h1v1h-1zM7 2h1v1h-1zM10 2h1v1h-1zM3 3h2v1h-2zM7 3h1v1h-1zM9 3h1v1h-1zM1 4h7v1h-7zM9 4h1v1h-1zM3 5h1v1h-1zM7 5h1v1h-1zM9 5h1v1h-1zM1 6h5v1h-5zM7 6h1v1h-1zM10 6h1v1h-1zM0 7h3v1h-3zM5 7h1v1h-1zM7 7h1v1h-1zM10 7h1v1h-1zM2 8h4v1h-4zM7 8h1v1h-1zM10 8h1v1h-1zM2 9h1v1h-1zM5 9h1v1h-1zM7 9h1v1h-1zM9 9h2v1h-2zM2 10h4v1h-4zM7 10h1v1h-1zM2 11h1v1h-1zM5 11h1v1h-1zM7 11h1v1h-1z" shape-rendering="crispEdges"/><path id="g58" d="M2 0h1v1h-1zM9 0h1v1h-1zM2 1h1v1h-1zM4 1h5v1h-5zM1 2h1v1h-1zM4 2h1v1h-1zM7 2h1v1h-1zM2 3h1v1h-1zM4 3h7v1h-7zM2 4h1v1h-1zM4 4h1v1h-1zM7 4h1v1h-1zM1 5h2v1h-2zM4 5h1v1h-1zM6 5h5v1h-5zM2 6h1v1h-1zM4 6h2v1h-2zM10 6h1v1h-1zM2 7h1v1h-1zM4 7h1v1h-1zM6 7h5v1h-5zM2 8h1v1h-1zM4 8h2v1h-2zM10 8h1v1h-1zM2 9h1v1h-1zM4 9h1v1h-1zM6 9h5v1h-5zM2 10h1v1h-1zM4 10h1v1h-1zM6 10h5v1h-5zM2 11h2v1h-2zM10 11h1v1h-1z" shape-rendering="crispEdges"/><path id="g59" d="M1 1h3v1h-3zM5 1h6v1h-6zM2 2h1v1h-1zM7 2h1v1h-1zM2 3h1v1h-1zM7 3h1v1h-1zM2 4h1v1h-1zM7 4h2v1h-2zM1 5h3v1h-3zM6 5h2v1h-2zM9 5h1v1h-1zM2 6h1v1h-1zM5 6h1v1h-1zM7 6h1v1h-1zM10 6h1v1h-1zM2 7h1v1h-1zM4 7h2v1h-2zM7 7h1v1h-1zM10 7h1v1h-1zM2 8h1v1h-1zM7 8h1v1h-1zM1 9h3v1h-3zM7 9h1v1h-1zM7 10h1v1h-1zM7 11h1v1h-1z" shape-rendering="crispEdges"/><path id="g60" d="M5 0h1v1h-1zM1 1h1v1h-1zM5 1h1v1h-1zM2 2h1v1h-1zM5 2h6v1h-6zM4 3h1v1h-1zM10 3h1v1h-1zM4 4h1v1h-1zM7 4h1v1h-1zM9 4h1v1h-1zM7 5h1v1h-1zM9 5h1v1h-1zM3 6h1v1h-1zM7 6h1v1h-1zM2 7h1v1h-1zM6 7h2v1h-2zM2 8h1v1h-1zM6 8h1v1h-1zM8 8h1v1h-1zM1 9h1v1h-1zM5 9h1v1h-1zM8 9h1v1h-1zM4 10h2v1h-2zM9 10h1v1h-1zM3 11h1v1h-1zM10 11h1v1h-1z" shape-rendering="crispEdges"/><path id="g61" d="M5 1h1v1h-1zM2 2h9v1h-9zM5 3h1v1h-1zM5 4h1v1h-1zM1 5h10v1h-10zM4 6h1v1h-1zM4 7h1v1h-1zM7 7h1v1h-1zM3 8h1v1h-1zM8 8h1v1h-1zM2 9h1v1h-1zM9 9h1v1h-1zM1 10h9v1h-9z" shape-rendering="crispEdges"/><path id="g62" d="M2 0h1v1h-1zM9 0h1v1h-1zM2 1h1v1h-1zM6 1h1v1h-1zM9 1h1v1h-1zM2 2h1v1h-1zM7 2h1v1h-1zM9 2h1v1h-1zM1 3h4v1h-4zM9 3h1v1h-1zM2 4h1v1h-1zM5 4h1v1h-1zM9 4h1v1h-1zM2 5h1v1h-1zM6 5h1v1h-1zM9 5h1v1h-1zM2 6h3v1h-3zM9 6h1v1h-1zM1 7h2v1h-2zM9 7h2v1h-2zM2 8h1v1h-1zM5 8h5v1h-5zM2 9h1v1h-1zM9 9h1v1h-1zM2 10h1v1h-1zM9 10h1v1h-1zM1 11h2v1h-2zM9 11h1v1h-1z" shape-rendering="crispEdges"/><path id="g63" d="M5 0h1v1h-1zM1 1h10v1h-10zM5 2h1v1h-1zM2 3h8v1h-8zM2 4h1v1h-1zM9 4h1v1h-1zM2 5h8v1h-8zM2 6h1v1h-1zM9 6h1v1h-1zM2 7h8v1h-8zM2 8h1v1h-1zM9 8h1v1h-1zM2 9h8v1h-8zM2 10h1v1h-1zM9 10h1v1h-1zM1 11h10v1h-10z" shape-rendering="crispEdges"/><path id="g64" d="M1 0h1v1h-1zM7 0h1v1h-1zM2 1h1v1h-1zM7 1h1v1h-1zM4 2h7v1h-7zM6 3h1v1h-1zM9 3h1v1h-1zM1 4h1v1h-1zM5 4h1v1h-1zM9 4h1v1h-1zM2 5h1v1h-1zM4 5h5v1h-5zM10 5h1v1h-1zM5 6h1v1h-1zM7 6h1v1h-1zM9 6h1v1h-1zM3 7h1v1h-1zM5 7h1v1h-1zM7 7h1v1h-1zM9 7h1v1h-1zM2 8h1v1h-1zM5 8h1v1h-1zM7 8h1v1h-1zM9 8h1v1h-1zM2 9h1v1h-1zM4 9h1v1h-1zM7 9h1v1h-1zM9 9h1v1h-1zM1 10h1v1h-1zM4 10h1v1h-1zM7 10h1v1h-1zM9 10h2v1h-2zM1 11h1v1h-1zM3 11h1v1h-1zM9 11h2v1h-2z" shape-rendering="crispEdges"/><path id="g65" d="M2 0h7v1h-7zM3 1h2v1h-2zM7 1h2v1h-2zM5 2h2v1h-2zM8 2h1v1h-1zM1 3h4v1h-4zM6 3h5v1h-5zM2 4h1v1h-1zM4 4h1v1h-1zM6 4h2v1h-2zM9 4h1v1h-1zM1 5h4v1h-4zM6 5h5v1h-5zM1 6h10v1h-10zM1 7h1v1h-1zM3 7h6v1h-6zM10 7h1v1h-1zM2 8h7v1h-7zM2 9h1v1h-1zM8 9h1v1h-1zM3 10h6v1h-6zM1 11h10v1h-10z" shape-rendering="crispEdges"/><path id="g66" d="M2 0h1v1h-1zM2 1h1v1h-1zM1 2h5v1h-5zM7 2h4v1h-4zM2 3h1v1h-1zM5 3h1v1h-1zM7 3h1v1h-1zM10 3h1v1h-1zM2 4h1v1h-1zM5 4h1v1h-1zM7 4h1v1h-1zM10 4h1v1h-1zM2 5h1v1h-1zM5 5h1v1h-1zM7 5h1v1h-1zM10 5h1v1h-1zM2 6h1v1h-1zM5 6h1v1h-1zM7 6h1v1h-1zM10 6h1v1h-1zM2 7h1v1h-1zM5 7h1v1h-1zM7 7h1v1h-1zM10 7h1v1h-1zM2 8h1v1h-1zM5 8h1v1h-1zM7 8h1v1h-1zM10 8h1v1h-1zM1 9h1v1h-1zM5 9h1v1h-1zM7 9h1v1h-1zM10 9h1v1h-1zM1 10h1v1h-1zM5 10h1v1h-1zM7 10h4v1h-4zM0 11h1v1h-1zM3 11h2v1h-2zM7 11h1v1h-1zM10 11h1v1h-1z" shape-rendering="crispEdges"/><path id="g67" d="M1 0h10v1h-10zM4 1h1v1h-1zM7 1h1v1h-1zM2 2h1v1h-1zM4 2h1v1h-1zM7 2h1v1h-1zM9 2h1v1h-1zM2 3h1v1h-1zM4 3h1v1h-1zM7 3h1v1h-1zM10 3h1v1h-1zM4 4h1v1h-1zM7 4h1v1h-1zM2 5h8v1h-8zM3 6h1v1h-1zM8 6h1v1h-1zM4 7h1v1h-1zM7 7h1v1h-1zM5 8h2v1h-2zM3 9h5v1h-5zM1 10h2v1h-2zM8 10h3v1h-3z" shape-rendering="crispEdges"/><path id="g68" d="M2 0h1v1h-1zM7 0h1v1h-1zM2 1h1v1h-1zM6 1h5v1h-5zM2 2h1v1h-1zM6 2h1v1h-1zM9 2h1v1h-1zM1 3h1v1h-1zM3 3h1v1h-1zM5 3h1v1h-1zM7 3h1v1h-1zM9 3h1v1h-1zM0 4h4v1h-4zM7 4h2v1h-2zM2 5h1v1h-1zM7 5h3v1h-3zM1 6h1v1h-1zM5 6h2v1h-2zM10 6h1v1h-1zM1 7h4v1h-4zM7 7h2v1h-2zM9 8h1v1h-1zM4 9h1v1h-1zM6 9h1v1h-1zM0 10h4v1h-4zM7 10h2v1h-2zM9 11h1v1h-1z" shape-rendering="crispEdges"/><path id="g69" d="M5 0h1v1h-1zM5 1h1v1h-1zM2 2h8v1h-8zM2 3h1v1h-1zM5 3h1v1h-1zM9 3h1v1h-1zM2 4h1v1h-1zM5 4h1v1h-1zM9 4h1v1h-1zM2 5h8v1h-8zM2 6h1v1h-1zM5 6h1v1h-1zM9 6h1v1h-1zM2 7h8v1h-8zM2 8h1v1h-1zM5 8h1v1h-1zM5 9h1v1h-1zM10 9h1v1h-1zM5 10h1v1h-1zM10 10h1v1h-1zM6 11h5v1h-5z" shape-rendering="crispEdges"/><path id="g70" d="M3 0h1v1h-1zM8 0h1v1h-1zM3 1h1v1h-1zM8 1h2v1h-2zM1 2h5v1h-5zM8 2h1v1h-1zM10 2h1v1h-1zM1 3h10v1h-10zM1 4h1v1h-1zM5 4h1v1h-1zM8 4h1v1h-1zM1 5h1v1h-1zM5 5h1v1h-1zM7 5h1v1h-1zM1 6h5v1h-5zM7 6h2v1h-2zM3 7h1v1h-1zM7 7h2v1h-2zM1 8h1v1h-1zM3 8h1v1h-1zM5 8h1v1h-1zM7 8h2v1h-2zM1 9h1v1h-1zM3 9h1v1h-1zM5 9h2v1h-2zM8 9h1v1h-1zM11 9h1v1h-1zM3 10h1v1h-1zM6 10h1v1h-1zM8 10h1v1h-1zM11 10h1v1h-1zM2 11h2v1h-2zM5 11h1v1h-1zM9 11h2v1h-2z" shape-rendering="crispEdges"/><path id="g71" d="M7 0h1v1h-1zM2 1h1v1h-1zM7 1h1v1h-1zM10 1h1v1h-1zM2 2h1v1h-1zM5 2h6v1h-6zM1 3h1v1h-1zM4 3h1v1h-1zM7 3h1v1h-1zM9 3h1v1h-1zM1 4h10v1h-10zM2 5h1v1h-1zM7 5h1v1h-1zM2 6h1v1h-1zM6 6h5v1h-5zM1 7h3v1h-3zM5 7h2v1h-2zM10 7h1v1h-1zM6 8h5v1h-5zM3 9h2v1h-2zM6 9h1v1h-1zM10 9h1v1h-1zM1 10h2v1h-2zM6 10h5v1h-5zM6 11h1v1h-1zM10 11h1v1h-1z" shape-rendering="crispEdges"/><path id="g72" d="M1 0h1v1h-1zM5 0h6v1h-6zM2 1h1v1h-1zM4 3h7v1h-7zM1 4h2v1h-2zM6 4h1v1h-1zM2 5h1v1h-1zM5 5h1v1h-1zM9 5h1v1h-1zM2 6h1v1h-1zM5 6h1v1h-1zM9 6h1v1h-1zM2 7h1v1h-1zM4 7h7v1h-7zM2 8h1v1h-1zM10 8h1v1h-1zM1 9h1v1h-1zM3 9h1v1h-1zM4 10h7v1h-7z" shape-rendering="crispEdges"/><path id="g73" d="M3 0h1v1h-1zM2 1h1v1h-1zM5 1h6v1h-6zM1 2h1v1h-1zM3 3h1v1h-1zM2 4h1v1h-1zM5 4h6v1h-6zM2 5h1v1h-1zM9 5h1v1h-1zM0 6h3v1h-3zM9 6h1v1h-1zM2 7h1v1h-1zM9 7h1v1h-1zM2 8h1v1h-1zM9 8h1v1h-1zM2 9h1v1h-1zM9 9h1v1h-1zM2 10h1v1h-1zM9 10h1v1h-1zM2 11h1v1h-1zM7 11h3v1h-3z" shape-rendering="crispEdges"/><path id="g74" d="M3 0h1v1h-1zM8 0h1v1h-1zM3 1h1v1h-1zM8 1h1v1h-1zM4 2h1v1h-1zM7 2h1v1h-1zM2 3h9v1h-9zM5 4h1v1h-1zM5 5h1v1h-1zM1 6h10v1h-10zM5 7h2v1h-2zM5 8h1v1h-1zM7 8h1v1h-1zM4 9h1v1h-1zM7 9h2v1h-2zM2 10h2v1h-2zM8 10h2v1h-2zM1 11h1v1h-1zM10 11h1v1h-1z" shape-rendering="crispEdges"/><path id="g75" d="M3 0h1v1h-1zM2 1h1v1h-1zM5 1h6v1h-6zM2 2h1v1h-1zM8 2h1v1h-1zM1 3h1v1h-1zM4 3h1v1h-1zM8 3h1v1h-1zM0 4h4v1h-4zM8 4h1v1h-1zM2 5h1v1h-1zM8 5h1v1h-1zM2 6h1v1h-1zM8 6h1v1h-1zM1 7h4v1h-4zM8 7h1v1h-1zM8 8h1v1h-1zM4 9h1v1h-1zM8 9h1v1h-1zM1 10h3v1h-3zM5 10h6v1h-6z" shape-rendering="crispEdges"/><path id="g76" d="M2 8h2v1h-2zM2 9h2v1h-2zM3 10h1v1h-1zM2 11h1v1h-1z" shape-rendering="crispEdges"/><path id="g77" d="M2 0h1v1h-1zM10 0h1v1h-1zM1 1h1v1h-1zM6 1h5v1h-5zM1 2h1v1h-1zM3 2h1v1h-1zM9 2h1v1h-1zM1 3h3v1h-3zM5 3h6v1h-6zM2 4h1v1h-1zM7 4h1v1h-1zM1 5h1v1h-1zM5 5h1v1h-1zM7 5h1v1h-1zM10 5h1v1h-1zM1 6h3v1h-3zM6 6h1v1h-1zM8 6h2v1h-2zM7 7h2v1h-2zM3 8h1v1h-1zM5 8h3v1h-3zM9 8h1v1h-1zM1 9h2v1h-2zM7 9h1v1h-1zM10 9h1v1h-1zM7 10h1v1h-1z" shape-rendering="crispEdges"/></defs></svg>
<div class="a" style="left:0px;top:0px;width:800px;height:24px;background:linear-gradient(90deg,#b8a0d8 0px,#a888cc 90px,#9470bc 170px,#8a62b6 240px,#8a62b6 440px,#8e66b9 540px,#9a78c2 620px,#ae94d2 690px,#a486ca 760px,#9c7cc4 800px)"></div>
<div class="a" style="left:0px;top:0px;width:800px;height:24px;background:radial-gradient(ellipse 60px 14px at 290px 20px,rgba(90,60,160,0.55),rgba(90,60,160,0))"></div>
<div class="a" style="left:0px;top:0px;width:800px;height:24px;background:radial-gradient(ellipse 90px 16px at 60px 10px,rgba(235,225,245,0.45),rgba(235,225,245,0))"></div>
<div class="a" style="left:0px;top:23px;width:800px;height:1px;background:#c4b2e0"></div>
<svg class="a" style="left:0;top:0" width="24" height="22">
<rect x="3" y="2" width="16" height="16" rx="2.5" fill="#ece8e0"/>
<rect x="3.5" y="2.5" width="15" height="15" rx="2.5" fill="none" stroke="#c8c0b8" stroke-width="0.8"/>
<rect x="5" y="4" width="12" height="12" fill="#0c4ea8"/>
<rect x="5" y="4" width="12" height="2" fill="#0a3c8c"/>
<rect x="7" y="6" width="4" height="4.5" fill="#f4f000"/>
<rect x="11" y="9" width="4" height="4.5" fill="#e82010"/>
<circle cx="8.5" cy="7.5" r="0.6" fill="#2060c0"/><circle cx="9.8" cy="8.4" r="0.6" fill="#2060c0"/>
<circle cx="12.3" cy="6.5" r="0.7" fill="#fff"/><circle cx="12.8" cy="7.6" r="0.6" fill="#fff"/>
<path d="M12 12 L13 10.5 L14 12" fill="none" stroke="#f8e040" stroke-width="0.8"/>
</svg>
<div class="a t" style="left:25px;top:4px;color:#1a1020;font-size:12px"><svg class="g" width="12" height="13"><use href="#g0"/></svg><svg class="g" width="12" height="13"><use href="#g1"/></svg><svg class="g" width="12" height="13"><use href="#g2"/></svg><svg class="g" width="12" height="13"><use href="#g3"/></svg><svg class="g" width="12" height="13"><use href="#g4"/></svg><svg class="g" width="12" height="13"><use href="#g5"/></svg></div>
<div class="a" style="left:695px;top:0px;width:29px;height:15px;border:1px solid #3c3050;border-top:none;border-radius:0 0 0 5px;background:linear-gradient(#d2c4e4 0%,#c4b0dc 48%,#9a80bc 52%,#a88ec8 100%)"></div>
<div class="a" style="left:704px;top:5px;width:12px;height:5px;background:#fff;border:1px solid #3a3a3a;border-radius:1px"></div>
<div class="a" style="left:723px;top:0px;width:28px;height:15px;border:1px solid #3c3050;border-top:none;border-left:1px solid #e0d8ec;background:linear-gradient(#d2c4e4 0%,#c4b0dc 48%,#9a80bc 52%,#a88ec8 100%)"></div>
<div class="a" style="left:732px;top:1px;width:10px;height:9px;border:2px solid #ddd2ea;background:#b8a4d0"></div>
<div class="a" style="left:750px;top:0px;width:48px;height:15px;border:1px solid #4a1c1c;border-top:none;border-radius:0 0 5px 0;background:linear-gradient(#eaa898 0%,#dc7868 45%,#c43c24 52%,#d0604c 100%)"></div>
<svg class="a" style="left:766px;top:1px" width="16" height="12"><path d="M3 1 L13 10 M13 1 L3 10" stroke="#3a2a3a" stroke-width="4.2"/><path d="M3 1 L13 10 M13 1 L3 10" stroke="#fff" stroke-width="2.6"/></svg>
<div class="a" style="left:2px;top:24px;width:796px;height:574px;background:#f0f0f0;border:1px solid #4a3a6a"></div>
<div class="a" style="left:3px;top:25px;width:794px;height:20px;background:linear-gradient(#fdfdfe 0px,#f4f6fb 6px,#dde4f3 7px,#d8e0f1 14px,#dfe6f5 20px)"></div>
<div class="a" style="left:3px;top:45px;width:794px;height:1px;background:#a8acb8"></div>
<div class="a" style="left:3px;top:46px;width:794px;height:1px;background:#fff"></div>
<div class="a t" style="left:10px;top:29px;"><svg class="g" width="12" height="13"><use href="#g6"/></svg><svg class="g" width="12" height="13"><use href="#g7"/></svg>(<u>F</u>)</div>
<div class="a t" style="left:62px;top:29px;"><svg class="g" width="12" height="13"><use href="#g4"/></svg><svg class="g" width="12" height="13"><use href="#g5"/></svg></div>
<div class="a t" style="left:100px;top:29px;"><svg class="g" width="12" height="13"><use href="#g8"/></svg><svg class="g" width="12" height="13"><use href="#g9"/></svg>(<u>H</u>)</div>
<div class="a" style="left:5px;top:47px;width:1px;height:24px;background:#fff"></div>
<div class="a" style="left:7px;top:47px;width:1px;height:24px;background:#a0a0a0"></div>
<div class="a" style="left:3px;top:71px;width:794px;height:1px;background:#a0a0a0"></div>
<div class="a" style="left:3px;top:72px;width:794px;height:1px;background:#808080"></div>
<div class="a" style="left:3px;top:73px;width:794px;height:1px;background:#fff"></div>
<div class="a" style="left:87px;top:49px;width:1px;height:20px;background:#a0a0a0"></div>
<div class="a" style="left:88px;top:49px;width:1px;height:20px;background:#fff"></div>
<div class="a" style="left:143px;top:49px;width:1px;height:20px;background:#a0a0a0"></div>
<div class="a" style="left:144px;top:49px;width:1px;height:20px;background:#fff"></div>
<div class="a" style="left:274px;top:49px;width:1px;height:20px;background:#a0a0a0"></div>
<div class="a" style="left:275px;top:49px;width:1px;height:20px;background:#fff"></div>
<div class="a" style="left:355px;top:49px;width:1px;height:20px;background:#a0a0a0"></div>
<div class="a" style="left:356px;top:49px;width:1px;height:20px;background:#fff"></div>
<div class="a" style="left:384px;top:49px;width:1px;height:20px;background:#a0a0a0"></div>
<div class="a" style="left:385px;top:49px;width:1px;height:20px;background:#fff"></div>
<svg class="a" style="left:0;top:0" width="400" height="72" shape-rendering="crispEdges">
<!-- open folder -->
<path d="M15.5 63.5 L15.5 55.5 L16.5 54.5 L18.5 54.5 L19.5 55.5 L25.5 55.5 L25.5 58.5" fill="none" stroke="#000"/>
<path d="M16 55 L19 55 L19.5 56 L25 56 L25 58 L19 58 L16 62.5 Z" fill="#ffff60"/>
<path d="M17 57h1M19 57h1M21 57h1M23 57h1M16 59h1M18 59h1M17 61h1" stroke="#fff" transform="translate(0 0.5)"/>
<path d="M16 63.5 L19.5 58.5 L30.5 58.5 L26.5 63.5 Z" fill="#808000" stroke="#000"/>
<path d="M15.5 63.5 L26.5 63.5" stroke="#000"/>
<path d="M23.5 52.5 L24.5 51.5 L26.5 51.5 L28.5 53.5" fill="none" stroke="#000"/>
<path d="M27 53.5 L30 53.5 L29 55.5 Z" fill="#000"/>
<!-- save -->
<rect x="40.5" y="51.5" width="14" height="14" fill="#808000" stroke="#000"/>
<rect x="43" y="52" width="9" height="6" fill="#e8e8e8"/>
<rect x="43" y="60" width="9" height="5" fill="#000"/>
<rect x="49" y="61" width="2" height="3" fill="#fff"/>
<!-- word -->
<path d="M64.5 54.5 L67.5 51.5 L77.5 51.5 L77.5 63.5 L64.5 63.5 Z" fill="#0000a0" stroke="#0000ff"/>
<path d="M65.5 55 L68 52.5 L76.5 52.5" fill="none" stroke="#fff"/>
<rect x="70.5" y="55.5" width="10" height="10" fill="#fff" stroke="#0000c0"/>
<rect x="71" y="57" width="9" height="2" fill="#0000a0"/>
<path d="M72 59.5 L73 63.5 L75.5 60.5 L78 63.5 L79 59.5" fill="none" stroke="#000080" stroke-width="1.3" shape-rendering="auto"/>
<!-- plus -->
<rect x="102" y="52" width="3" height="13" fill="#000"/><rect x="97" y="57" width="13" height="3" fill="#000"/>
<rect x="103" y="53" width="1" height="11" fill="#fff"/><rect x="98" y="58" width="11" height="1" fill="#fff"/>
<!-- minus -->
<rect x="121" y="56" width="14" height="3" fill="#000"/><rect x="122" y="57" width="12" height="1" fill="#fff"/>
<!-- play -->
<path d="M156.5 51.5 L164.5 58.5 L156.5 65.5 Z" fill="#ffff00" stroke="#000"/>
<path d="M177.5 52.5 L184.5 58.5 L177.5 64.5 Z" fill="#ffff00" stroke="#000"/>
<path d="M184.5 52.5 L191.5 58.5 L184.5 64.5 Z" fill="#ffff00" stroke="#000"/>
</svg>
<svg class="a" style="left:0;top:0" width="400" height="72">
<!-- gray x -->
<circle cx="210" cy="59" r="7" fill="#b4b4b4"/>
<path d="M207 56 L213 62 M213 56 L207 62" stroke="#fff" stroke-width="2.2"/>
</svg>
<svg class="a" style="left:0;top:0" width="400" height="72" shape-rendering="crispEdges">
<!-- monitor -->
<rect x="226" y="51" width="16" height="15" fill="#000"/>
<rect x="227.5" y="52.5" width="13" height="12" fill="#000" stroke="#fff"/>
<rect x="229" y="54" width="10" height="9" fill="#008000"/>
<rect x="232" y="54" width="1" height="9" fill="#004000"/><rect x="235" y="54" width="1" height="9" fill="#004000"/>
<rect x="229" y="58" width="10" height="1" fill="#004000"/>
<path d="M229.5 61 L231.5 57.5 L233.5 57 L235.5 60.5 L238.5 60.5" fill="none" stroke="#ffff00" shape-rendering="auto"/>
<!-- undo green -->
<path d="M252.5 55.5 L256.5 51.5 L256.5 53.5 L263.5 53.5 L266.5 56.5 L266.5 62.5 L264.5 64.5 L257.5 64.5 L257.5 60.5 L262.5 60.5 L262.5 57.5 L256.5 57.5 L256.5 59.5 Z" fill="#00ff00" stroke="#000"/>
<!-- blue lines red zig -->
<rect x="282" y="56" width="17" height="2" fill="#0000ff"/>
<rect x="282" y="60" width="17" height="2" fill="#0000ff"/>
<path d="M291 52.5 L289 56.5 L292 58.5 L289.5 63.5" fill="none" stroke="#ff0000" stroke-width="1.5" shape-rendering="auto"/>
<path d="M287.5 62.5 L289.5 64.5 L291.5 62.5" fill="none" stroke="#ff0000" stroke-width="1.2" shape-rendering="auto"/>
<circle cx="291" cy="52.5" r="1" fill="#ff0000"/>
<!-- film/edit -->
<rect x="307" y="51" width="3" height="16" fill="#000"/>
<rect x="320" y="51" width="3" height="16" fill="#000"/>
<rect x="308" y="53" width="1" height="2" fill="#fff"/><rect x="308" y="57" width="1" height="2" fill="#fff"/><rect x="308" y="59" width="1" height="1" fill="#ffff00"/><rect x="308" y="61" width="1" height="2" fill="#ffff00"/>
<rect x="310" y="51" width="10" height="1" fill="#000"/>
<rect x="310" y="52" width="10" height="14" fill="#f4f4f4"/>
<rect x="311" y="64" width="8" height="1" fill="#a0a0a0"/><rect x="311" y="61" width="3" height="1" fill="#a0a0a0"/>
<path d="M314.5 62.5 L321.5 55.5" stroke="#c0c000" stroke-width="2.2" shape-rendering="auto"/>
<path d="M318 56 L320 54 M316 60 L318 58" stroke="#00a000" stroke-width="1" shape-rendering="auto"/>
<circle cx="315" cy="62.5" r="1.2" fill="#000080"/>
<!-- calc teal -->
<rect x="333" y="52" width="14" height="12" fill="#008080"/>
<rect x="333" y="52" width="14" height="1" fill="#00ffff"/><rect x="333" y="52" width="1" height="11" fill="#00ffff"/>
<rect x="335" y="54" width="8" height="4" fill="#000"/><rect x="336" y="55" width="6" height="2" fill="#fff"/>
<path d="M335 59h1M337 59h1M339 59h1M341 59h1M343 59h2M335 61h1M337 61h1M339 61h1M341 61h3" stroke="#fff" stroke-width="1" transform="translate(0 0.5)"/>
<rect x="333" y="63" width="14" height="2" fill="#000040"/>
<!-- help cursor -->
<path d="M364.5 52.5 L364.5 64.5 L367.5 61.5 L369.5 66.5 L371.5 65.5 L369.5 60.5 L373.5 60.5 Z" fill="#000" stroke="#000"/>
<path d="M373 54 Q373 51 376 51 Q379 51 379 54 Q379 56 377 57 L376 58 L376 60" fill="none" stroke="#000080" stroke-width="2.2" shape-rendering="auto"/>
<rect x="375" y="62" width="2.5" height="2.5" fill="#000080"/>
</svg>
<div class="a" style="left:3px;top:72px;width:1px;height:505px;background:#a0a0a0"></div>
<div class="a" style="left:4px;top:73px;width:1px;height:494px;background:#696969"></div>
<div class="a" style="left:5px;top:93px;width:786px;height:1px;background:#fff"></div>
<div class="a" style="left:5px;top:93px;width:1px;height:474px;background:#fff"></div>
<div class="a" style="left:790px;top:93px;width:1px;height:474px;background:#a0a0a0"></div>
<div class="a" style="left:791px;top:93px;width:1px;height:474px;background:#fff"></div>
<div class="a" style="left:5px;top:566px;width:786px;height:1px;background:#a0a0a0"></div>
<div class="a" style="left:4px;top:567px;width:788px;height:1px;background:#fff"></div>
<div class="a" style="left:8px;top:76px;width:59px;height:17px;border-top:1px solid #fff;border-left:1px solid #fff;border-right:2px solid #696969;background:#f0f0f0"></div>
<div class="a t" style="left:10px;top:78px;color:#000">1:<svg class="g" width="12" height="13"><use href="#g10"/></svg><svg class="g" width="12" height="13"><use href="#g11"/></svg><svg class="g" width="12" height="13"><use href="#g1"/></svg></div>
<div class="a" style="left:67px;top:76px;width:96px;height:17px;border-top:1px solid #fff;border-left:1px solid #fff;border-right:2px solid #696969;background:#f0f0f0"></div>
<div class="a t" style="left:69px;top:78px;color:#000">2:<svg class="g" width="12" height="13"><use href="#g12"/></svg><svg class="g" width="12" height="13"><use href="#g13"/></svg><svg class="g" width="12" height="13"><use href="#g14"/></svg><svg class="g" width="12" height="13"><use href="#g15"/></svg><svg class="g" width="12" height="13"><use href="#g16"/></svg><svg class="g" width="12" height="13"><use href="#g17"/></svg></div>
<div class="a" style="left:163px;top:76px;width:48px;height:17px;border-top:1px solid #fff;border-left:1px solid #fff;border-right:2px solid #696969;background:#f0f0f0"></div>
<div class="a t" style="left:165px;top:78px;color:#000">3:<svg class="g" width="12" height="13"><use href="#g18"/></svg><svg class="g" width="12" height="13"><use href="#g17"/></svg></div>
<div class="a" style="left:211px;top:74px;width:62px;height:19px;border-top:1px solid #fff;border-left:1px solid #fff;border-right:2px solid #696969;background:#f0f0f0"></div>
<div class="a t" style="left:212px;top:78px;color:#ff0000">4:<svg class="g" width="12" height="13"><use href="#g18"/></svg><svg class="g" width="12" height="13"><use href="#g17"/></svg><svg class="g" width="12" height="13"><use href="#g19"/></svg></div>
<div class="a" style="left:212px;top:75px;width:59px;height:17px;border:1px dotted #000"></div>
<div class="a" style="left:16px;top:100px;width:13px;height:13px;background:#fff;border-top:1px solid #a0a0a0;border-left:1px solid #a0a0a0;border-right:1px solid #fff;border-bottom:1px solid #fff;box-shadow:inset 1px 1px 0 #696969, inset -1px -1px 0 #e3e3e3"></div>
<svg class="a" style="left:16px;top:100px" width="13" height="13"><path d="M3 6.5 L5.5 9 L10 3.5" stroke="#000" stroke-width="2" fill="none"/></svg>
<div class="a t" style="left:33px;top:100px;"><svg class="g" width="12" height="13"><use href="#g20"/></svg><svg class="g" width="12" height="13"><use href="#g0"/></svg><svg class="g" width="12" height="13"><use href="#g1"/></svg><svg class="g" width="12" height="13"><use href="#g21"/></svg><svg class="g" width="12" height="13"><use href="#g22"/></svg></div>
<div class="a t" style="left:272px;top:99px;"><svg class="g" width="12" height="13"><use href="#g0"/></svg><svg class="g" width="12" height="13"><use href="#g1"/></svg><svg class="g" width="12" height="13"><use href="#g23"/></svg></div>
<div class="a" style="left:322px;top:97px;width:100px;height:18px;background:#fff;border-top:1px solid #a0a0a0;border-left:1px solid #a0a0a0;border-right:1px solid #fff;border-bottom:1px solid #fff;box-shadow:inset 1px 1px 0 #696969, inset -1px -1px 0 #e3e3e3"></div>
<div class="a t" style="left:326px;top:100px;"><svg class="g" width="12" height="13"><use href="#g18"/></svg><svg class="g" width="12" height="13"><use href="#g17"/></svg><svg class="g" width="12" height="13"><use href="#g19"/></svg></div>
<div class="a" style="left:404px;top:99px;width:16px;height:14px;background:#f0f0f0;border-top:1px solid #fff;border-left:1px solid #fff;border-right:1px solid #696969;border-bottom:1px solid #696969;box-shadow:inset -1px -1px 0 #a0a0a0"></div>
<svg class="a" style="left:404px;top:99px" width="16" height="14"><path d="M4.5 5 L11.5 5 L8 9 Z" fill="#000"/></svg>
<div class="a" style="left:7px;top:117px;width:424px;height:1px;background:#a0a0a0"></div>
<div class="a" style="left:8px;top:118px;width:423px;height:1px;background:#fff"></div>
<div class="a" style="left:7px;top:117px;width:1px;height:231px;background:#a0a0a0"></div>
<div class="a" style="left:8px;top:118px;width:1px;height:230px;background:#fff"></div>
<div class="a" style="left:7px;top:348px;width:425px;height:1px;background:#a0a0a0"></div>
<div class="a" style="left:7px;top:349px;width:426px;height:1px;background:#fff"></div>
<div class="a" style="left:431px;top:117px;width:1px;height:232px;background:#a0a0a0"></div>
<div class="a" style="left:432px;top:117px;width:1px;height:233px;background:#fff"></div>
<div class="a" style="left:11px;top:122px;width:417px;height:225px;background:#fff;border-top:1px solid #696969;border-left:1px solid #696969"></div>
<div class="a" style="left:12px;top:123px;width:416px;height:1px;background:#a0a0a0"></div>
<div class="a" style="left:12px;top:123px;width:1px;height:224px;background:#a0a0a0"></div>
<div class="a" style="left:13px;top:123px;width:56px;height:16px;background:#f0f0f0;border-top:1px solid #fff;border-left:1px solid #fff;border-right:1px solid #696969;border-bottom:1px solid #696969;box-shadow:inset -1px -1px 0 #a0a0a0"></div>
<div class="a t" style="left:13px;top:125px;width:56px;text-align:center;"><svg class="g" width="12" height="13"><use href="#g24"/></svg><svg class="g" width="12" height="13"><use href="#g25"/></svg></div>
<div class="a" style="left:69px;top:123px;width:120px;height:16px;background:#f0f0f0;border-top:1px solid #fff;border-left:1px solid #fff;border-right:1px solid #696969;border-bottom:1px solid #696969;box-shadow:inset -1px -1px 0 #a0a0a0"></div>
<div class="a t" style="left:69px;top:125px;width:120px;text-align:center;"><svg class="g" width="12" height="13"><use href="#g26"/></svg><svg class="g" width="12" height="13"><use href="#g27"/></svg></div>
<div class="a" style="left:189px;top:123px;width:116px;height:16px;background:#f0f0f0;border-top:1px solid #fff;border-left:1px solid #fff;border-right:1px solid #696969;border-bottom:1px solid #696969;box-shadow:inset -1px -1px 0 #a0a0a0"></div>
<div class="a t" style="left:189px;top:125px;width:116px;text-align:center;"><svg class="g" width="12" height="13"><use href="#g28"/></svg><svg class="g" width="12" height="13"><use href="#g29"/></svg></div>
<div class="a" style="left:305px;top:123px;width:121px;height:16px;background:#f0f0f0;border-top:1px solid #fff;border-left:1px solid #fff;border-right:1px solid #696969;border-bottom:1px solid #696969;box-shadow:inset -1px -1px 0 #a0a0a0"></div>
<div class="a t" style="left:305px;top:125px;width:121px;text-align:center;"><svg class="g" width="12" height="13"><use href="#g30"/></svg><svg class="g" width="12" height="13"><use href="#g31"/></svg></div>
<div class="a" style="left:13px;top:141px;width:56px;height:16px;background:#ccffcc"></div>
<div class="a" style="left:13px;top:157px;width:413px;height:1px;background:#e4e4e4"></div>
<div class="a t m" style="left:12px;top:145px;width:56px;text-align:center;">UA</div>
<div class="a t m" style="left:68px;top:145px;width:120px;text-align:center;">57.735</div>
<div class="a t m" style="left:188px;top:145px;width:116px;text-align:center;">0.00</div>
<div class="a t m" style="left:304px;top:145px;width:121px;text-align:center;">50.000</div>
<div class="a" style="left:13px;top:158px;width:56px;height:16px;background:#ccffcc"></div>
<div class="a" style="left:13px;top:174px;width:413px;height:1px;background:#e4e4e4"></div>
<div class="a t m" style="left:12px;top:162px;width:56px;text-align:center;">UB</div>
<div class="a t m" style="left:68px;top:162px;width:120px;text-align:center;">57.735</div>
<div class="a t m" style="left:188px;top:162px;width:116px;text-align:center;">-120.00</div>
<div class="a t m" style="left:304px;top:162px;width:121px;text-align:center;">50.000</div>
<div class="a" style="left:13px;top:175px;width:56px;height:16px;background:#ccffcc"></div>
<div class="a" style="left:13px;top:191px;width:413px;height:1px;background:#e4e4e4"></div>
<div class="a t m" style="left:12px;top:179px;width:56px;text-align:center;">UC</div>
<div class="a t m" style="left:68px;top:179px;width:120px;text-align:center;">57.735</div>
<div class="a t m" style="left:188px;top:179px;width:116px;text-align:center;">120.00</div>
<div class="a t m" style="left:304px;top:179px;width:121px;text-align:center;">50.000</div>
<div class="a" style="left:13px;top:192px;width:56px;height:16px;background:#ccffcc"></div>
<div class="a" style="left:13px;top:208px;width:413px;height:1px;background:#e4e4e4"></div>
<div class="a t m" style="left:12px;top:196px;width:56px;text-align:center;">IA</div>
<div class="a t m" style="left:68px;top:196px;width:120px;text-align:center;">0.000</div>
<div class="a t m" style="left:188px;top:196px;width:116px;text-align:center;">0.00</div>
<div class="a t m" style="left:304px;top:196px;width:121px;text-align:center;">50.000</div>
<div class="a" style="left:13px;top:209px;width:56px;height:16px;background:#ccffcc"></div>
<div class="a" style="left:13px;top:225px;width:413px;height:1px;background:#e4e4e4"></div>
<div class="a t m" style="left:12px;top:213px;width:56px;text-align:center;">IB</div>
<div class="a t m" style="left:68px;top:213px;width:120px;text-align:center;">0.000</div>
<div class="a t m" style="left:188px;top:213px;width:116px;text-align:center;">-120.00</div>
<div class="a t m" style="left:304px;top:213px;width:121px;text-align:center;">50.000</div>
<div class="a" style="left:13px;top:226px;width:56px;height:16px;background:#ccffcc"></div>
<div class="a" style="left:13px;top:242px;width:413px;height:1px;background:#e4e4e4"></div>
<div class="a t m" style="left:12px;top:230px;width:56px;text-align:center;">IC</div>
<div class="a t m" style="left:68px;top:230px;width:120px;text-align:center;">0.000</div>
<div class="a t m" style="left:188px;top:230px;width:116px;text-align:center;">120.00</div>
<div class="a t m" style="left:304px;top:230px;width:121px;text-align:center;">50.000</div>
<div class="a" style="left:13px;top:243px;width:56px;height:16px;background:#ccffcc"></div>
<div class="a" style="left:13px;top:259px;width:413px;height:1px;background:#e4e4e4"></div>
<div class="a t m" style="left:12px;top:247px;width:56px;text-align:center;">Ua</div>
<div class="a t m" style="left:68px;top:247px;width:120px;text-align:center;">0.000</div>
<div class="a t m" style="left:188px;top:247px;width:116px;text-align:center;">0.00</div>
<div class="a t m" style="left:304px;top:247px;width:121px;text-align:center;">50.000</div>
<div class="a" style="left:13px;top:260px;width:56px;height:16px;background:#ccffcc"></div>
<div class="a" style="left:13px;top:276px;width:413px;height:1px;background:#e4e4e4"></div>
<div class="a t m" style="left:12px;top:264px;width:56px;text-align:center;">Ub</div>
<div class="a t m" style="left:68px;top:264px;width:120px;text-align:center;">0.000</div>
<div class="a t m" style="left:188px;top:264px;width:116px;text-align:center;">-120.00</div>
<div class="a t m" style="left:304px;top:264px;width:121px;text-align:center;">50.000</div>
<div class="a" style="left:13px;top:277px;width:56px;height:16px;background:#ccffcc"></div>
<div class="a" style="left:13px;top:293px;width:413px;height:1px;background:#e4e4e4"></div>
<div class="a t m" style="left:12px;top:281px;width:56px;text-align:center;">Uc</div>
<div class="a t m" style="left:68px;top:281px;width:120px;text-align:center;">100.000</div>
<div class="a t m" style="left:188px;top:281px;width:116px;text-align:center;">120.00</div>
<div class="a t m" style="left:304px;top:281px;width:121px;text-align:center;">50.000</div>
<div class="a" style="left:13px;top:294px;width:56px;height:16px;background:#ccffcc"></div>
<div class="a" style="left:13px;top:310px;width:413px;height:1px;background:#e4e4e4"></div>
<div class="a t m" style="left:12px;top:298px;width:56px;text-align:center;">Ia</div>
<div class="a t m" style="left:68px;top:298px;width:120px;text-align:center;">0.000</div>
<div class="a t m" style="left:188px;top:298px;width:116px;text-align:center;">0.00</div>
<div class="a t m" style="left:304px;top:298px;width:121px;text-align:center;">50.000</div>
<div class="a" style="left:13px;top:311px;width:56px;height:16px;background:#ccffcc"></div>
<div class="a" style="left:13px;top:327px;width:413px;height:1px;background:#e4e4e4"></div>
<div class="a t m" style="left:12px;top:315px;width:56px;text-align:center;">Ib</div>
<div class="a t m" style="left:68px;top:315px;width:120px;text-align:center;">0.000</div>
<div class="a t m" style="left:188px;top:315px;width:116px;text-align:center;">-120.00</div>
<div class="a t m" style="left:304px;top:315px;width:121px;text-align:center;">50.000</div>
<div class="a" style="left:13px;top:328px;width:56px;height:16px;background:#ccffcc"></div>
<div class="a" style="left:13px;top:344px;width:413px;height:1px;background:#e4e4e4"></div>
<div class="a t m" style="left:12px;top:332px;width:56px;text-align:center;">Ic</div>
<div class="a t m" style="left:68px;top:332px;width:120px;text-align:center;">0.000</div>
<div class="a t m" style="left:188px;top:332px;width:116px;text-align:center;">120.00</div>
<div class="a t m" style="left:304px;top:332px;width:121px;text-align:center;">50.000</div>
<div class="a" style="left:13px;top:140px;width:413px;height:1px;background:#f4f4f4"></div>
<div class="a" style="left:69px;top:139px;width:1px;height:207px;background:#e4e4e4"></div>
<div class="a" style="left:189px;top:139px;width:1px;height:207px;background:#e4e4e4"></div>
<div class="a" style="left:305px;top:139px;width:1px;height:207px;background:#e4e4e4"></div>
<div class="a" style="left:426px;top:139px;width:1px;height:207px;background:#e4e4e4"></div>
<div class="a" style="left:7px;top:357px;width:178px;height:1px;background:#a0a0a0"></div>
<div class="a" style="left:8px;top:358px;width:177px;height:1px;background:#fff"></div>
<div class="a" style="left:7px;top:357px;width:1px;height:100px;background:#a0a0a0"></div>
<div class="a" style="left:8px;top:358px;width:1px;height:99px;background:#fff"></div>
<div class="a" style="left:7px;top:457px;width:179px;height:1px;background:#a0a0a0"></div>
<div class="a" style="left:7px;top:458px;width:180px;height:1px;background:#fff"></div>
<div class="a" style="left:185px;top:357px;width:1px;height:101px;background:#a0a0a0"></div>
<div class="a" style="left:186px;top:357px;width:1px;height:102px;background:#fff"></div>
<div class="a t" style="left:12px;top:351px;padding:0 2px;background:#f0f0f0"><svg class="g" width="12" height="13"><use href="#g4"/></svg><svg class="g" width="12" height="13"><use href="#g5"/></svg><svg class="g" width="12" height="13"><use href="#g24"/></svg><svg class="g" width="12" height="13"><use href="#g25"/></svg><svg class="g" width="12" height="13"><use href="#g32"/></svg><svg class="g" width="12" height="13"><use href="#g33"/></svg></div>
<div class="a" style="left:12px;top:365px;width:168px;height:87px;background:#fff;border-top:1px solid #696969;border-left:1px solid #696969"></div>
<div class="a" style="left:13px;top:366px;width:76px;height:16px;background:#f0f0f0;border-top:1px solid #fff;border-left:1px solid #fff;border-right:1px solid #696969;border-bottom:1px solid #696969;box-shadow:inset -1px -1px 0 #a0a0a0"></div>
<div class="a t" style="left:13px;top:368px;width:76px;text-align:center;"><svg class="g" width="12" height="13"><use href="#g25"/></svg><svg class="g" width="12" height="13"><use href="#g34"/></svg><svg class="g" width="12" height="13"><use href="#g35"/></svg></div>
<div class="a" style="left:89px;top:366px;width:90px;height:16px;background:#f0f0f0;border-top:1px solid #fff;border-left:1px solid #fff;border-right:1px solid #696969;border-bottom:1px solid #696969;box-shadow:inset -1px -1px 0 #a0a0a0"></div>
<div class="a t" style="left:89px;top:368px;width:90px;text-align:center;"><svg class="g" width="12" height="13"><use href="#g27"/></svg></div>
<div class="a" style="left:13px;top:384px;width:77px;height:16px;background:#ccffcc"></div>
<div class="a" style="left:90px;top:384px;width:89px;height:16px;background:#ffffcc"></div>
<div class="a" style="left:13px;top:400px;width:166px;height:1px;background:#e4e4e4"></div>
<div class="a t" style="left:13px;top:386px;width:76px;text-align:center;"><svg class="g" width="12" height="13"><use href="#g36"/></svg><svg class="g" width="12" height="13"><use href="#g37"/></svg><svg class="g" width="12" height="13"><use href="#g38"/></svg><svg class="g" width="12" height="13"><use href="#g7"/></svg></div>
<div class="a t" style="left:89px;top:386px;width:90px;text-align:center;"><svg class="g" width="12" height="13"><use href="#g39"/></svg><svg class="g" width="12" height="13"><use href="#g40"/></svg><svg class="g" width="12" height="13"><use href="#g36"/></svg><svg class="g" width="12" height="13"><use href="#g37"/></svg></div>
<div class="a" style="left:13px;top:401px;width:77px;height:16px;background:#ccffcc"></div>
<div class="a" style="left:90px;top:401px;width:89px;height:16px;background:#f0fff0"></div>
<div class="a" style="left:13px;top:417px;width:166px;height:1px;background:#e4e4e4"></div>
<div class="a t" style="left:13px;top:403px;width:76px;text-align:center;"><svg class="g" width="12" height="13"><use href="#g41"/></svg><svg class="g" width="12" height="13"><use href="#g42"/></svg><svg class="g" width="12" height="13"><use href="#g43"/></svg><svg class="g" width="12" height="13"><use href="#g44"/></svg></div>
<div class="a t" style="left:89px;top:403px;width:90px;text-align:center;"></div>
<div class="a" style="left:13px;top:418px;width:77px;height:16px;background:#ccffcc"></div>
<div class="a" style="left:90px;top:418px;width:89px;height:16px;background:#fff"></div>
<div class="a" style="left:13px;top:434px;width:166px;height:1px;background:#e4e4e4"></div>
<div class="a t" style="left:13px;top:420px;width:76px;text-align:center;"><svg class="g" width="12" height="13"><use href="#g4"/></svg><svg class="g" width="12" height="13"><use href="#g5"/></svg><svg class="g" width="12" height="13"><use href="#g39"/></svg><svg class="g" width="12" height="13"><use href="#g40"/></svg></div>
<div class="a t m" style="left:89px;top:422px;width:90px;text-align:center;">5.000 s</div>
<div class="a" style="left:13px;top:435px;width:77px;height:16px;background:#ccffcc"></div>
<div class="a" style="left:90px;top:435px;width:89px;height:16px;background:#fff"></div>
<div class="a" style="left:13px;top:451px;width:166px;height:1px;background:#e4e4e4"></div>
<div class="a t" style="left:13px;top:437px;width:76px;text-align:center;"><svg class="g" width="12" height="13"><use href="#g36"/></svg><svg class="g" width="12" height="13"><use href="#g37"/></svg><svg class="g" width="12" height="13"><use href="#g19"/></svg><svg class="g" width="12" height="13"><use href="#g45"/></svg><svg class="g" width="12" height="13"><use href="#g39"/></svg></div>
<div class="a t m" style="left:89px;top:439px;width:90px;text-align:center;">0.000 s</div>
<div class="a" style="left:89px;top:382px;width:1px;height:69px;background:#e4e4e4"></div>
<div class="a" style="left:7px;top:465px;width:178px;height:1px;background:#a0a0a0"></div>
<div class="a" style="left:8px;top:466px;width:177px;height:1px;background:#fff"></div>
<div class="a" style="left:7px;top:465px;width:1px;height:99px;background:#a0a0a0"></div>
<div class="a" style="left:8px;top:466px;width:1px;height:98px;background:#fff"></div>
<div class="a" style="left:7px;top:564px;width:179px;height:1px;background:#a0a0a0"></div>
<div class="a" style="left:7px;top:565px;width:180px;height:1px;background:#fff"></div>
<div class="a" style="left:185px;top:465px;width:1px;height:100px;background:#a0a0a0"></div>
<div class="a" style="left:186px;top:465px;width:1px;height:101px;background:#fff"></div>
<div class="a t" style="left:13px;top:459px;padding:0 2px;background:#f0f0f0"><svg class="g" width="12" height="13"><use href="#g41"/></svg><svg class="g" width="12" height="13"><use href="#g22"/></svg><svg class="g" width="12" height="13"><use href="#g46"/></svg><svg class="g" width="12" height="13"><use href="#g47"/></svg><svg class="g" width="12" height="13"><use href="#g48"/></svg></div>
<div class="a" style="left:12px;top:475px;width:168px;height:87px;background:#fff;border-top:1px solid #696969;border-left:1px solid #696969"></div>
<div class="a" style="left:13px;top:476px;width:42px;height:15px;background:#f0f0f0;border-top:1px solid #fff;border-left:1px solid #fff;border-right:1px solid #696969;border-bottom:1px solid #696969;box-shadow:inset -1px -1px 0 #a0a0a0"></div>
<div class="a t" style="left:13px;top:478px;width:42px;text-align:center;"><svg class="g" width="12" height="13"><use href="#g24"/></svg><svg class="g" width="12" height="13"><use href="#g46"/></svg></div>
<div class="a" style="left:55px;top:476px;width:39px;height:15px;background:#f0f0f0;border-top:1px solid #fff;border-left:1px solid #fff;border-right:1px solid #696969;border-bottom:1px solid #696969;box-shadow:inset -1px -1px 0 #a0a0a0"></div>
<div class="a t" style="left:55px;top:478px;width:39px;text-align:center;"><svg class="g" width="12" height="13"><use href="#g0"/></svg><svg class="g" width="12" height="13"><use href="#g1"/></svg></div>
<div class="a" style="left:94px;top:476px;width:43px;height:15px;background:#f0f0f0;border-top:1px solid #fff;border-left:1px solid #fff;border-right:1px solid #696969;border-bottom:1px solid #696969;box-shadow:inset -1px -1px 0 #a0a0a0"></div>
<div class="a t" style="left:94px;top:478px;width:43px;text-align:center;"><svg class="g" width="12" height="13"><use href="#g24"/></svg><svg class="g" width="12" height="13"><use href="#g46"/></svg></div>
<div class="a" style="left:137px;top:476px;width:42px;height:15px;background:#f0f0f0;border-top:1px solid #fff;border-left:1px solid #fff;border-right:1px solid #696969;border-bottom:1px solid #696969;box-shadow:inset -1px -1px 0 #a0a0a0"></div>
<div class="a t" style="left:137px;top:478px;width:42px;text-align:center;"><svg class="g" width="12" height="13"><use href="#g0"/></svg><svg class="g" width="12" height="13"><use href="#g1"/></svg></div>
<div class="a" style="left:13px;top:494px;width:42px;height:16px;background:#f0fff0"></div>
<div class="a t" style="left:13px;top:496px;width:42px;text-align:center;"><svg class="g" width="12" height="13"><use href="#g41"/></svg><svg class="g" width="12" height="13"><use href="#g22"/></svg>1</div>
<div class="a" style="left:55px;top:494px;width:39px;height:16px;background:#ccffcc"></div>
<div class="a t" style="left:55px;top:496px;width:39px;text-align:center;"><svg class="g" width="12" height="13"><use href="#g18"/></svg></div>
<div class="a" style="left:94px;top:494px;width:43px;height:16px;background:#f0fff0"></div>
<div class="a t" style="left:94px;top:496px;width:43px;text-align:center;"><svg class="g" width="12" height="13"><use href="#g41"/></svg><svg class="g" width="12" height="13"><use href="#g22"/></svg>5</div>
<div class="a" style="left:137px;top:494px;width:42px;height:16px;background:#ccffcc"></div>
<div class="a t" style="left:137px;top:496px;width:42px;text-align:center;"><svg class="g" width="12" height="13"><use href="#g49"/></svg></div>
<div class="a" style="left:13px;top:510px;width:166px;height:1px;background:#e4e4e4"></div>
<div class="a" style="left:13px;top:511px;width:42px;height:16px;background:#f0fff0"></div>
<div class="a t" style="left:13px;top:513px;width:42px;text-align:center;"><svg class="g" width="12" height="13"><use href="#g41"/></svg><svg class="g" width="12" height="13"><use href="#g22"/></svg>2</div>
<div class="a" style="left:55px;top:511px;width:39px;height:16px;background:#ccffcc"></div>
<div class="a t" style="left:55px;top:513px;width:39px;text-align:center;"><svg class="g" width="12" height="13"><use href="#g49"/></svg></div>
<div class="a" style="left:94px;top:511px;width:43px;height:16px;background:#f0fff0"></div>
<div class="a t" style="left:94px;top:513px;width:43px;text-align:center;"><svg class="g" width="12" height="13"><use href="#g41"/></svg><svg class="g" width="12" height="13"><use href="#g22"/></svg>6</div>
<div class="a" style="left:137px;top:511px;width:42px;height:16px;background:#ccffcc"></div>
<div class="a t" style="left:137px;top:513px;width:42px;text-align:center;"><svg class="g" width="12" height="13"><use href="#g49"/></svg></div>
<div class="a" style="left:13px;top:527px;width:166px;height:1px;background:#e4e4e4"></div>
<div class="a" style="left:13px;top:528px;width:42px;height:16px;background:#f0fff0"></div>
<div class="a t" style="left:13px;top:530px;width:42px;text-align:center;"><svg class="g" width="12" height="13"><use href="#g41"/></svg><svg class="g" width="12" height="13"><use href="#g22"/></svg>3</div>
<div class="a" style="left:55px;top:528px;width:39px;height:16px;background:#ccffcc"></div>
<div class="a t" style="left:55px;top:530px;width:39px;text-align:center;"><svg class="g" width="12" height="13"><use href="#g49"/></svg></div>
<div class="a" style="left:94px;top:528px;width:43px;height:16px;background:#f0fff0"></div>
<div class="a t" style="left:94px;top:530px;width:43px;text-align:center;"><svg class="g" width="12" height="13"><use href="#g41"/></svg><svg class="g" width="12" height="13"><use href="#g22"/></svg>7</div>
<div class="a" style="left:137px;top:528px;width:42px;height:16px;background:#ccffcc"></div>
<div class="a t" style="left:137px;top:530px;width:42px;text-align:center;"><svg class="g" width="12" height="13"><use href="#g49"/></svg></div>
<div class="a" style="left:13px;top:544px;width:166px;height:1px;background:#e4e4e4"></div>
<div class="a" style="left:13px;top:545px;width:42px;height:16px;background:#f0fff0"></div>
<div class="a t" style="left:13px;top:547px;width:42px;text-align:center;"><svg class="g" width="12" height="13"><use href="#g41"/></svg><svg class="g" width="12" height="13"><use href="#g22"/></svg>4</div>
<div class="a" style="left:55px;top:545px;width:39px;height:16px;background:#ccffcc"></div>
<div class="a t" style="left:55px;top:547px;width:39px;text-align:center;"><svg class="g" width="12" height="13"><use href="#g49"/></svg></div>
<div class="a" style="left:94px;top:545px;width:43px;height:16px;background:#f0fff0"></div>
<div class="a t" style="left:94px;top:547px;width:43px;text-align:center;"><svg class="g" width="12" height="13"><use href="#g41"/></svg><svg class="g" width="12" height="13"><use href="#g22"/></svg>8</div>
<div class="a" style="left:137px;top:545px;width:42px;height:16px;background:#ccffcc"></div>
<div class="a t" style="left:137px;top:547px;width:42px;text-align:center;"><svg class="g" width="12" height="13"><use href="#g49"/></svg></div>
<div class="a" style="left:13px;top:561px;width:166px;height:1px;background:#e4e4e4"></div>
<div class="a" style="left:187px;top:358px;width:250px;height:1px;background:#a0a0a0"></div>
<div class="a" style="left:188px;top:359px;width:249px;height:1px;background:#fff"></div>
<div class="a" style="left:187px;top:358px;width:1px;height:206px;background:#a0a0a0"></div>
<div class="a" style="left:188px;top:359px;width:1px;height:205px;background:#fff"></div>
<div class="a" style="left:187px;top:564px;width:251px;height:1px;background:#a0a0a0"></div>
<div class="a" style="left:187px;top:565px;width:252px;height:1px;background:#fff"></div>
<div class="a" style="left:437px;top:358px;width:1px;height:207px;background:#a0a0a0"></div>
<div class="a" style="left:438px;top:358px;width:1px;height:208px;background:#fff"></div>
<div class="a t" style="left:194px;top:352px;padding:0 2px;background:#f0f0f0"><svg class="g" width="12" height="13"><use href="#g41"/></svg><svg class="g" width="12" height="13"><use href="#g42"/></svg><svg class="g" width="12" height="13"><use href="#g46"/></svg><svg class="g" width="12" height="13"><use href="#g47"/></svg><svg class="g" width="12" height="13"><use href="#g48"/></svg></div>
<div class="a" style="left:193px;top:367px;width:244px;height:195px;background:#fff;border-top:1px solid #696969;border-left:1px solid #696969"></div>
<div class="a" style="left:194px;top:368px;width:21px;height:16px;background:#f0f0f0;border-top:1px solid #fff;border-left:1px solid #fff;border-right:1px solid #696969;border-bottom:1px solid #696969;box-shadow:inset -1px -1px 0 #a0a0a0"></div>
<div class="a" style="left:215px;top:368px;width:48px;height:16px;background:#f0f0f0;border-top:1px solid #fff;border-left:1px solid #fff;border-right:1px solid #696969;border-bottom:1px solid #696969;box-shadow:inset -1px -1px 0 #a0a0a0"></div>
<div class="a t" style="left:215px;top:370px;width:48px;text-align:center;"><svg class="g" width="12" height="13"><use href="#g41"/></svg><svg class="g" width="12" height="13"><use href="#g42"/></svg><svg class="g" width="12" height="13"><use href="#g46"/></svg></div>
<div class="a" style="left:263px;top:368px;width:86px;height:16px;background:#f0f0f0;border-top:1px solid #fff;border-left:1px solid #fff;border-right:1px solid #696969;border-bottom:1px solid #696969;box-shadow:inset -1px -1px 0 #a0a0a0"></div>
<div class="a t" style="left:263px;top:370px;width:86px;text-align:center;"><svg class="g" width="12" height="13"><use href="#g50"/></svg><svg class="g" width="12" height="13"><use href="#g51"/></svg><svg class="g" width="12" height="13"><use href="#g39"/></svg><svg class="g" width="12" height="13"><use href="#g40"/></svg><span class="m">(ms)</span></div>
<div class="a" style="left:349px;top:368px;width:87px;height:16px;background:#f0f0f0;border-top:1px solid #fff;border-left:1px solid #fff;border-right:1px solid #696969;border-bottom:1px solid #696969;box-shadow:inset -1px -1px 0 #a0a0a0"></div>
<div class="a t" style="left:349px;top:370px;width:87px;text-align:center;"><svg class="g" width="12" height="13"><use href="#g50"/></svg><svg class="g" width="12" height="13"><use href="#g51"/></svg><svg class="g" width="12" height="13"><use href="#g52"/></svg><svg class="g" width="12" height="13"><use href="#g53"/></svg><span class="m">(ms)</span></div>
<div class="a" style="left:215px;top:385px;width:48px;height:16px;background:#ccffcc"></div>
<div class="a" style="left:263px;top:385px;width:173px;height:16px;background:#f0fff0"></div>
<div class="a" style="left:194px;top:401px;width:242px;height:1px;background:#e4e4e4"></div>
<div class="a" style="left:199px;top:388px;width:13px;height:13px;background:#fff;border:2px solid #808080"></div>
<svg class="a" style="left:199px;top:388px" width="13" height="13"><path d="M3 6.5 L5.5 9 L10 3.5" stroke="#000" stroke-width="2" fill="none"/></svg>
<div class="a t" style="left:224px;top:388px;"><svg class="g" width="12" height="13"><use href="#g41"/></svg><svg class="g" width="12" height="13"><use href="#g42"/></svg><span class="m">A</span></div>
<div class="a" style="left:215px;top:402px;width:48px;height:16px;background:#ccffcc"></div>
<div class="a" style="left:263px;top:402px;width:173px;height:16px;background:#f0fff0"></div>
<div class="a" style="left:194px;top:418px;width:242px;height:1px;background:#e4e4e4"></div>
<div class="a" style="left:199px;top:405px;width:13px;height:13px;background:#fff;border:2px solid #808080"></div>
<svg class="a" style="left:199px;top:405px" width="13" height="13"><path d="M3 6.5 L5.5 9 L10 3.5" stroke="#000" stroke-width="2" fill="none"/></svg>
<div class="a t" style="left:224px;top:405px;"><svg class="g" width="12" height="13"><use href="#g41"/></svg><svg class="g" width="12" height="13"><use href="#g42"/></svg><span class="m">B</span></div>
<div class="a" style="left:215px;top:419px;width:48px;height:16px;background:#ccffcc"></div>
<div class="a" style="left:263px;top:419px;width:173px;height:16px;background:#f0fff0"></div>
<div class="a" style="left:194px;top:435px;width:242px;height:1px;background:#e4e4e4"></div>
<div class="a" style="left:199px;top:422px;width:13px;height:13px;background:#fff;border:2px solid #808080"></div>
<svg class="a" style="left:199px;top:422px" width="13" height="13"><path d="M3 6.5 L5.5 9 L10 3.5" stroke="#000" stroke-width="2" fill="none"/></svg>
<div class="a t" style="left:224px;top:422px;"><svg class="g" width="12" height="13"><use href="#g41"/></svg><svg class="g" width="12" height="13"><use href="#g42"/></svg><span class="m">C</span></div>
<div class="a" style="left:215px;top:436px;width:48px;height:16px;background:#ccffcc"></div>
<div class="a" style="left:263px;top:436px;width:173px;height:16px;background:#f0fff0"></div>
<div class="a" style="left:194px;top:452px;width:242px;height:1px;background:#e4e4e4"></div>
<div class="a" style="left:199px;top:439px;width:13px;height:13px;background:#fff;border:2px solid #808080"></div>
<svg class="a" style="left:199px;top:439px" width="13" height="13"><path d="M3 6.5 L5.5 9 L10 3.5" stroke="#000" stroke-width="2" fill="none"/></svg>
<div class="a t" style="left:224px;top:439px;"><svg class="g" width="12" height="13"><use href="#g41"/></svg><svg class="g" width="12" height="13"><use href="#g42"/></svg><span class="m">R</span></div>
<div class="a" style="left:215px;top:453px;width:48px;height:16px;background:#ccffcc"></div>
<div class="a" style="left:263px;top:453px;width:173px;height:16px;background:#f0fff0"></div>
<div class="a" style="left:194px;top:469px;width:242px;height:1px;background:#e4e4e4"></div>
<div class="a" style="left:199px;top:456px;width:13px;height:13px;background:#fff;border:2px solid #808080"></div>
<svg class="a" style="left:199px;top:456px" width="13" height="13"><path d="M3 6.5 L5.5 9 L10 3.5" stroke="#000" stroke-width="2" fill="none"/></svg>
<div class="a t" style="left:224px;top:456px;"><svg class="g" width="12" height="13"><use href="#g41"/></svg><svg class="g" width="12" height="13"><use href="#g42"/></svg><span class="m">a</span></div>
<div class="a" style="left:215px;top:470px;width:48px;height:16px;background:#ccffcc"></div>
<div class="a" style="left:263px;top:470px;width:173px;height:16px;background:#f0fff0"></div>
<div class="a" style="left:194px;top:486px;width:242px;height:1px;background:#e4e4e4"></div>
<div class="a" style="left:199px;top:473px;width:13px;height:13px;background:#fff;border:2px solid #808080"></div>
<svg class="a" style="left:199px;top:473px" width="13" height="13"><path d="M3 6.5 L5.5 9 L10 3.5" stroke="#000" stroke-width="2" fill="none"/></svg>
<div class="a t" style="left:224px;top:473px;"><svg class="g" width="12" height="13"><use href="#g41"/></svg><svg class="g" width="12" height="13"><use href="#g42"/></svg><span class="m">b</span></div>
<div class="a" style="left:215px;top:487px;width:48px;height:16px;background:#ccffcc"></div>
<div class="a" style="left:263px;top:487px;width:173px;height:16px;background:#f0fff0"></div>
<div class="a" style="left:194px;top:503px;width:242px;height:1px;background:#e4e4e4"></div>
<div class="a" style="left:199px;top:490px;width:13px;height:13px;background:#fff;border:2px solid #808080"></div>
<svg class="a" style="left:199px;top:490px" width="13" height="13"><path d="M3 6.5 L5.5 9 L10 3.5" stroke="#000" stroke-width="2" fill="none"/></svg>
<div class="a t" style="left:224px;top:490px;"><svg class="g" width="12" height="13"><use href="#g41"/></svg><svg class="g" width="12" height="13"><use href="#g42"/></svg><span class="m">c</span></div>
<div class="a" style="left:215px;top:504px;width:48px;height:16px;background:#ccffcc"></div>
<div class="a" style="left:263px;top:504px;width:173px;height:16px;background:#f0fff0"></div>
<div class="a" style="left:194px;top:520px;width:242px;height:1px;background:#e4e4e4"></div>
<div class="a" style="left:199px;top:507px;width:13px;height:13px;background:#fff;border:2px solid #808080"></div>
<svg class="a" style="left:199px;top:507px" width="13" height="13"><path d="M3 6.5 L5.5 9 L10 3.5" stroke="#000" stroke-width="2" fill="none"/></svg>
<div class="a t" style="left:224px;top:507px;"><svg class="g" width="12" height="13"><use href="#g41"/></svg><svg class="g" width="12" height="13"><use href="#g42"/></svg><span class="m">r</span></div>
<div class="a" style="left:215px;top:521px;width:48px;height:16px;background:#ccffcc"></div>
<div class="a" style="left:263px;top:521px;width:173px;height:16px;background:#f0fff0"></div>
<div class="a" style="left:194px;top:537px;width:242px;height:1px;background:#e4e4e4"></div>
<div class="a" style="left:199px;top:524px;width:13px;height:13px;background:#fff;border:2px solid #808080"></div>
<svg class="a" style="left:199px;top:524px" width="13" height="13"><path d="M3 6.5 L5.5 9 L10 3.5" stroke="#000" stroke-width="2" fill="none"/></svg>
<div class="a t" style="left:224px;top:524px;"><svg class="g" width="12" height="13"><use href="#g41"/></svg><svg class="g" width="12" height="13"><use href="#g42"/></svg><span class="m">E</span></div>
<div class="a" style="left:215px;top:538px;width:48px;height:16px;background:#ccffcc"></div>
<div class="a" style="left:263px;top:538px;width:173px;height:16px;background:#f0fff0"></div>
<div class="a" style="left:194px;top:554px;width:242px;height:1px;background:#e4e4e4"></div>
<div class="a" style="left:199px;top:541px;width:13px;height:13px;background:#fff;border:2px solid #808080"></div>
<svg class="a" style="left:199px;top:541px" width="13" height="13"><path d="M3 6.5 L5.5 9 L10 3.5" stroke="#000" stroke-width="2" fill="none"/></svg>
<div class="a t" style="left:224px;top:541px;"><svg class="g" width="12" height="13"><use href="#g41"/></svg><svg class="g" width="12" height="13"><use href="#g42"/></svg><span class="m">e</span></div>
<div class="a" style="left:214px;top:384px;width:1px;height:177px;background:#e4e4e4"></div>
<div class="a" style="left:262px;top:384px;width:1px;height:177px;background:#e4e4e4"></div>
<div class="a" style="left:348px;top:384px;width:1px;height:177px;background:#e4e4e4"></div>
<div class="a" style="left:446px;top:77px;width:13px;height:13px;background:#fff;border-top:1px solid #a0a0a0;border-left:1px solid #a0a0a0;border-right:1px solid #fff;border-bottom:1px solid #fff;box-shadow:inset 1px 1px 0 #696969, inset -1px -1px 0 #e3e3e3"></div>
<div class="a t" style="left:464px;top:79px;"><svg class="g" width="12" height="13"><use href="#g50"/></svg><svg class="g" width="12" height="13"><use href="#g51"/></svg><svg class="g" width="12" height="13"><use href="#g54"/></svg><svg class="g" width="12" height="13"><use href="#g55"/></svg><svg class="g" width="12" height="13"><use href="#g56"/></svg><svg class="g" width="12" height="13"><use href="#g52"/></svg><svg class="g" width="12" height="13"><use href="#g53"/></svg><svg class="g" width="12" height="13"><use href="#g57"/></svg><svg class="g" width="12" height="13"><use href="#g36"/></svg><svg class="g" width="12" height="13"><use href="#g37"/></svg></div>
<div class="a t" style="left:445px;top:104px;"><svg class="g" width="12" height="13"><use href="#g0"/></svg><svg class="g" width="12" height="13"><use href="#g1"/></svg><svg class="g" width="12" height="13"><use href="#g58"/></svg><svg class="g" width="12" height="13"><use href="#g59"/></svg><svg class="g" width="12" height="13"><use href="#g60"/></svg><svg class="g" width="12" height="13"><use href="#g25"/></svg><span class="m">(0~1000)</span></div>
<div class="a" style="left:572px;top:97px;width:60px;height:19px;background:#fff;border-top:1px solid #a0a0a0;border-left:1px solid #a0a0a0;border-right:1px solid #fff;border-bottom:1px solid #fff;box-shadow:inset 1px 1px 0 #696969, inset -1px -1px 0 #e3e3e3"></div>
<div class="a t" style="left:576px;top:100px;font-size:11px">0</div>
<div class="a t" style="left:640px;top:104px;"><svg class="g" width="12" height="13"><use href="#g61"/></svg><svg class="g" width="12" height="13"><use href="#g62"/></svg><svg class="g" width="12" height="13"><use href="#g39"/></svg><svg class="g" width="12" height="13"><use href="#g40"/></svg>:</div>
<div class="a" style="left:695px;top:99px;width:60px;height:18px;background:#fff;border-top:1px solid #a0a0a0;border-left:1px solid #a0a0a0;border-right:1px solid #fff;border-bottom:1px solid #fff;box-shadow:inset 1px 1px 0 #696969, inset -1px -1px 0 #e3e3e3"></div>
<div class="a t" style="left:698px;top:102px;font-size:12px">5</div>
<div class="a t m" style="left:766px;top:102px;">ms</div>
<svg class="a" style="left:0;top:0" width="800" height="600"><rect x="448" y="123" width="294" height="285" fill="#fff"/><rect x="448" y="123" width="293" height="284" fill="#a0a0a0"/><rect x="449" y="124" width="292" height="283" fill="#e3e3e3"/><rect x="449" y="124" width="291" height="282" fill="#696969"/><rect x="450" y="125" width="290" height="281" fill="#000"/><g shape-rendering="crispEdges"><circle cx="599.5" cy="265.5" r="18.5" fill="none" stroke="#666"/><circle cx="599.5" cy="265.5" r="45" fill="none" stroke="#666"/><circle cx="599.5" cy="265.5" r="72" fill="none" stroke="#666"/><circle cx="599.5" cy="265.5" r="99" fill="none" stroke="#666"/><circle cx="599.5" cy="265.5" r="126" fill="none" stroke="#666"/><line x1="599.5" y1="265.5" x2="724.00" y2="265.50" stroke="#666"/><line x1="599.5" y1="265.5" x2="707.32" y2="203.25" stroke="#666"/><line x1="599.5" y1="265.5" x2="661.75" y2="157.68" stroke="#666"/><line x1="599.5" y1="265.5" x2="599.50" y2="141.00" stroke="#666"/><line x1="599.5" y1="265.5" x2="537.25" y2="157.68" stroke="#666"/><line x1="599.5" y1="265.5" x2="491.68" y2="203.25" stroke="#666"/><line x1="599.5" y1="265.5" x2="475.00" y2="265.50" stroke="#666"/><line x1="599.5" y1="265.5" x2="491.68" y2="327.75" stroke="#666"/><line x1="599.5" y1="265.5" x2="537.25" y2="373.32" stroke="#666"/><line x1="599.5" y1="265.5" x2="599.50" y2="390.00" stroke="#666"/><line x1="599.5" y1="265.5" x2="661.75" y2="373.32" stroke="#666"/><line x1="599.5" y1="265.5" x2="707.32" y2="327.75" stroke="#666"/></g><line x1="599.5" y1="265.5" x2="547.5" y2="175.5" stroke="#ff00ff" stroke-width="1.3"/><line x1="547.5" y1="175.5" x2="553.56" y2="179.00" stroke="#ff00ff" stroke-width="1.3"/><line x1="547.5" y1="175.5" x2="547.50" y2="182.50" stroke="#ff00ff" stroke-width="1.3"/><line x1="599.5" y1="265.5" x2="569.5" y2="213.5" stroke="#ff0030" stroke-width="1.3"/><line x1="569.5" y1="213.5" x2="575.56" y2="217.00" stroke="#ff0030" stroke-width="1.3"/><line x1="569.5" y1="213.5" x2="569.50" y2="220.50" stroke="#ff0030" stroke-width="1.3"/><line x1="599.5" y1="265.5" x2="569.5" y2="317.5" stroke="#00e000" stroke-width="1.3"/><line x1="569.5" y1="317.5" x2="569.50" y2="310.50" stroke="#00e000" stroke-width="1.3"/><line x1="569.5" y1="317.5" x2="575.56" y2="314.00" stroke="#00e000" stroke-width="1.3"/><line x1="599.5" y1="265.5" x2="660.5" y2="265.5" stroke="#ffff00" stroke-width="1.3"/><line x1="660.5" y1="265.5" x2="654.44" y2="269.00" stroke="#ffff00" stroke-width="1.3"/><line x1="660.5" y1="265.5" x2="654.44" y2="262.00" stroke="#ffff00" stroke-width="1.3"/><line x1="458" y1="128.5" x2="488" y2="128.5" stroke="#e6a000" stroke-width="1"/><path d="M482 125.5 L488 128.5 L482 131.5" fill="none" stroke="#e6a000"/><text x="489" y="135.0" fill="#e6a000" font-family="Liberation Mono" font-size="12" letter-spacing="-1.2">Ua</text><line x1="458" y1="138.5" x2="488" y2="138.5" stroke="#00ffff" stroke-width="1"/><path d="M482 135.5 L488 138.5 L482 141.5" fill="none" stroke="#00ffff"/><text x="489" y="145.0" fill="#00ffff" font-family="Liberation Mono" font-size="12" letter-spacing="-1.2">Ub</text><line x1="458" y1="148.5" x2="488" y2="148.5" stroke="#ff00ff" stroke-width="1"/><path d="M482 145.5 L488 148.5 L482 151.5" fill="none" stroke="#ff00ff"/><text x="489" y="155.0" fill="#ff00ff" font-family="Liberation Mono" font-size="12" letter-spacing="-1.2">Uc</text><line x1="692" y1="128.5" x2="725" y2="128.5" stroke="#e6a000" stroke-width="2"/><path d="M719 125.5 L725 128.5 L719 131.5" fill="none" stroke="#e6a000"/><text x="726.5" y="135.0" fill="#e6a000" font-family="Liberation Mono" font-size="12" letter-spacing="-1.2">Ia</text><line x1="692" y1="138.5" x2="725" y2="138.5" stroke="#00ffff" stroke-width="2"/><path d="M719 135.5 L725 138.5 L719 141.5" fill="none" stroke="#00ffff"/><text x="726.5" y="145.0" fill="#00ffff" font-family="Liberation Mono" font-size="12" letter-spacing="-1.2">Ib</text><line x1="692" y1="148.5" x2="725" y2="148.5" stroke="#ff00ff" stroke-width="2"/><path d="M719 145.5 L725 148.5 L719 151.5" fill="none" stroke="#ff00ff"/><text x="726.5" y="155.0" fill="#ff00ff" font-family="Liberation Mono" font-size="12" letter-spacing="-1.2">Ic</text><line x1="458" y1="374.5" x2="488" y2="374.5" stroke="#ffff00" stroke-width="1"/><path d="M482 371.5 L488 374.5 L482 377.5" fill="none" stroke="#ffff00"/><text x="489" y="378.0" fill="#ffff00" font-family="Liberation Mono" font-size="12" letter-spacing="-1.2">UA</text><line x1="458" y1="384.5" x2="488" y2="384.5" stroke="#00ff00" stroke-width="1"/><path d="M482 381.5 L488 384.5 L482 387.5" fill="none" stroke="#00ff00"/><text x="489" y="388.0" fill="#00ff00" font-family="Liberation Mono" font-size="12" letter-spacing="-1.2">UB</text><line x1="458" y1="394.5" x2="488" y2="394.5" stroke="#ff0000" stroke-width="1"/><path d="M482 391.5 L488 394.5 L482 397.5" fill="none" stroke="#ff0000"/><text x="489" y="398.0" fill="#ff0000" font-family="Liberation Mono" font-size="12" letter-spacing="-1.2">UC</text><line x1="692" y1="374.5" x2="725" y2="374.5" stroke="#ffff00" stroke-width="2"/><path d="M719 371.5 L725 374.5 L719 377.5" fill="none" stroke="#ffff00"/><text x="726.5" y="378.0" fill="#ffff00" font-family="Liberation Mono" font-size="12" letter-spacing="-1.2">IA</text><line x1="692" y1="384.5" x2="725" y2="384.5" stroke="#00ff00" stroke-width="2"/><path d="M719 381.5 L725 384.5 L719 387.5" fill="none" stroke="#00ff00"/><text x="726.5" y="388.0" fill="#00ff00" font-family="Liberation Mono" font-size="12" letter-spacing="-1.2">IB</text><line x1="692" y1="394.5" x2="725" y2="394.5" stroke="#ff0000" stroke-width="2"/><path d="M719 391.5 L725 394.5 L719 397.5" fill="none" stroke="#ff0000"/><text x="726.5" y="398.0" fill="#ff0000" font-family="Liberation Mono" font-size="12" letter-spacing="-1.2">IC</text></svg>
<div class="a" style="left:443px;top:421px;width:340px;height:1px;background:#a0a0a0"></div>
<div class="a" style="left:444px;top:422px;width:339px;height:1px;background:#fff"></div>
<div class="a" style="left:443px;top:421px;width:1px;height:44px;background:#a0a0a0"></div>
<div class="a" style="left:444px;top:422px;width:1px;height:43px;background:#fff"></div>
<div class="a" style="left:443px;top:465px;width:341px;height:1px;background:#a0a0a0"></div>
<div class="a" style="left:443px;top:466px;width:342px;height:1px;background:#fff"></div>
<div class="a" style="left:783px;top:421px;width:1px;height:45px;background:#a0a0a0"></div>
<div class="a" style="left:784px;top:421px;width:1px;height:46px;background:#fff"></div>
<div class="a t" style="left:450px;top:415px;padding:0 2px;background:#f0f0f0"><svg class="g" width="12" height="13"><use href="#g63"/></svg><svg class="g" width="12" height="13"><use href="#g64"/></svg><svg class="g" width="12" height="13"><use href="#g49"/></svg><svg class="g" width="12" height="13"><use href="#g46"/></svg><svg class="g" width="12" height="13"><use href="#g32"/></svg><svg class="g" width="12" height="13"><use href="#g33"/></svg></div>
<div class="a" style="left:449px;top:439px;width:13px;height:13px;background:#fff;border-top:1px solid #a0a0a0;border-left:1px solid #a0a0a0;border-right:1px solid #fff;border-bottom:1px solid #fff;box-shadow:inset 1px 1px 0 #696969, inset -1px -1px 0 #e3e3e3"></div>
<div class="a t" style="left:467px;top:439px;"><svg class="g" width="12" height="13"><use href="#g65"/></svg><svg class="g" width="12" height="13"><use href="#g66"/></svg><svg class="g" width="12" height="13"><use href="#g63"/></svg><svg class="g" width="12" height="13"><use href="#g64"/></svg><svg class="g" width="12" height="13"><use href="#g49"/></svg><svg class="g" width="12" height="13"><use href="#g46"/></svg></div>
<div class="a t" style="left:544px;top:440px;"><svg class="g" width="12" height="13"><use href="#g39"/></svg><svg class="g" width="12" height="13"><use href="#g40"/></svg><svg class="g" width="12" height="13"><use href="#g11"/></svg><svg class="g" width="12" height="13"><use href="#g25"/></svg>:</div>
<div class="a" style="left:604px;top:433px;width:59px;height:19px;background:#fff;border-top:1px solid #a0a0a0;border-left:1px solid #a0a0a0;border-right:1px solid #fff;border-bottom:1px solid #fff;box-shadow:inset 1px 1px 0 #696969, inset -1px -1px 0 #e3e3e3"></div>
<div class="a t m" style="left:608px;top:438px;">1 ms</div>
<div class="a t" style="left:672px;top:437px;"><svg class="g" width="12" height="13"><use href="#g65"/></svg><svg class="g" width="12" height="13"><use href="#g66"/></svg><svg class="g" width="12" height="13"><use href="#g28"/></svg>:</div>
<div class="a" style="left:721px;top:432px;width:55px;height:19px;background:#fff;border-top:1px solid #a0a0a0;border-left:1px solid #a0a0a0;border-right:1px solid #fff;border-bottom:1px solid #fff;box-shadow:inset 1px 1px 0 #696969, inset -1px -1px 0 #e3e3e3"></div>
<div class="a t m" style="left:724px;top:437px;">IA</div>
<div class="a" style="left:758px;top:434px;width:16px;height:15px;background:#f0f0f0;border-top:1px solid #fff;border-left:1px solid #fff;border-right:1px solid #696969;border-bottom:1px solid #696969;box-shadow:inset -1px -1px 0 #a0a0a0"></div>
<svg class="a" style="left:758px;top:434px" width="16" height="15"><path d="M4.5 6 L11.5 6 L8 10 Z" fill="#000"/></svg>
<div class="a" style="left:443px;top:480px;width:342px;height:1px;background:#a0a0a0"></div>
<div class="a" style="left:444px;top:481px;width:341px;height:1px;background:#fff"></div>
<div class="a" style="left:443px;top:480px;width:1px;height:75px;background:#a0a0a0"></div>
<div class="a" style="left:444px;top:481px;width:1px;height:74px;background:#fff"></div>
<div class="a" style="left:443px;top:555px;width:343px;height:1px;background:#a0a0a0"></div>
<div class="a" style="left:443px;top:556px;width:344px;height:1px;background:#fff"></div>
<div class="a" style="left:785px;top:480px;width:1px;height:76px;background:#a0a0a0"></div>
<div class="a" style="left:786px;top:480px;width:1px;height:77px;background:#fff"></div>
<div class="a t" style="left:450px;top:474px;padding:0 2px;background:#f0f0f0"><svg class="g" width="12" height="13"><use href="#g67"/></svg><svg class="g" width="12" height="13"><use href="#g30"/></svg><svg class="g" width="12" height="13"><use href="#g67"/></svg><svg class="g" width="12" height="13"><use href="#g15"/></svg><svg class="g" width="12" height="13"><use href="#g24"/></svg><svg class="g" width="12" height="13"><use href="#g25"/></svg><svg class="g" width="12" height="13"><use href="#g32"/></svg><svg class="g" width="12" height="13"><use href="#g33"/></svg></div>
<div class="a" style="left:448px;top:495px;width:13px;height:13px;background:#fff;border-top:1px solid #a0a0a0;border-left:1px solid #a0a0a0;border-right:1px solid #fff;border-bottom:1px solid #fff;box-shadow:inset 1px 1px 0 #696969, inset -1px -1px 0 #e3e3e3"></div>
<div class="a t" style="left:465px;top:496px;"><svg class="g" width="12" height="13"><use href="#g30"/></svg><svg class="g" width="12" height="13"><use href="#g31"/></svg><svg class="g" width="12" height="13"><use href="#g67"/></svg></div>
<div class="a t m" style="left:509px;top:497px;">df/dt:</div>
<div class="a" style="left:547px;top:492px;width:60px;height:20px;background:#fff;border-top:1px solid #a0a0a0;border-left:1px solid #a0a0a0;border-right:1px solid #fff;border-bottom:1px solid #fff;box-shadow:inset 1px 1px 0 #696969, inset -1px -1px 0 #e3e3e3"></div>
<div class="a t m" style="left:550px;top:497px;">1.0 Hz/s</div>
<div class="a t" style="left:613px;top:497px;"><svg class="g" width="12" height="13"><use href="#g68"/></svg><svg class="g" width="12" height="13"><use href="#g27"/></svg>:</div>
<div class="a" style="left:647px;top:490px;width:71px;height:20px;background:#fff;border-top:1px solid #a0a0a0;border-left:1px solid #a0a0a0;border-right:1px solid #fff;border-bottom:1px solid #fff;box-shadow:inset 1px 1px 0 #696969, inset -1px -1px 0 #e3e3e3"></div>
<div class="a t m" style="left:650px;top:495px;">100.000 Hz</div>
<div class="a t" style="left:727px;top:497px;"><svg class="g" width="12" height="13"><use href="#g67"/></svg><svg class="g" width="12" height="13"><use href="#g46"/></svg><svg class="g" width="12" height="13"><use href="#g47"/></svg><svg class="g" width="12" height="13"><use href="#g48"/></svg>:</div>
<div class="a" style="left:448px;top:528px;width:13px;height:13px;background:#fff;border-top:1px solid #a0a0a0;border-left:1px solid #a0a0a0;border-right:1px solid #fff;border-bottom:1px solid #fff;box-shadow:inset 1px 1px 0 #696969, inset -1px -1px 0 #e3e3e3"></div>
<div class="a t" style="left:465px;top:529px;"><svg class="g" width="12" height="13"><use href="#g69"/></svg><svg class="g" width="12" height="13"><use href="#g15"/></svg><svg class="g" width="12" height="13"><use href="#g67"/></svg></div>
<div class="a t m" style="left:509px;top:530px;">dv/dt:</div>
<div class="a" style="left:547px;top:525px;width:60px;height:20px;background:#fff;border-top:1px solid #a0a0a0;border-left:1px solid #a0a0a0;border-right:1px solid #fff;border-bottom:1px solid #fff;box-shadow:inset 1px 1px 0 #696969, inset -1px -1px 0 #e3e3e3"></div>
<div class="a t m" style="left:550px;top:530px;">1.0 v/s</div>
<div class="a t" style="left:613px;top:530px;"><svg class="g" width="12" height="13"><use href="#g68"/></svg><svg class="g" width="12" height="13"><use href="#g27"/></svg>:</div>
<div class="a" style="left:647px;top:523px;width:71px;height:20px;background:#fff;border-top:1px solid #a0a0a0;border-left:1px solid #a0a0a0;border-right:1px solid #fff;border-bottom:1px solid #fff;box-shadow:inset 1px 1px 0 #696969, inset -1px -1px 0 #e3e3e3"></div>
<div class="a t m" style="left:650px;top:528px;">100.000 V</div>
<div class="a" style="left:727px;top:516px;width:55px;height:19px;background:#fff;border-top:1px solid #a0a0a0;border-left:1px solid #a0a0a0;border-right:1px solid #fff;border-bottom:1px solid #fff;box-shadow:inset 1px 1px 0 #696969, inset -1px -1px 0 #e3e3e3"></div>
<div class="a t m" style="left:730px;top:521px;">UA</div>
<div class="a" style="left:764px;top:518px;width:16px;height:15px;background:#f0f0f0;border-top:1px solid #fff;border-left:1px solid #fff;border-right:1px solid #696969;border-bottom:1px solid #696969;box-shadow:inset -1px -1px 0 #a0a0a0"></div>
<svg class="a" style="left:764px;top:518px" width="16" height="15"><path d="M4.5 6 L11.5 6 L8 10 Z" fill="#000"/></svg>
<div class="a" style="left:3px;top:577px;width:794px;height:1px;background:#fff"></div>
<div class="a t" style="left:5px;top:583px;"><svg class="g" width="12" height="13"><use href="#g70"/></svg><svg class="g" width="12" height="13"><use href="#g71"/></svg></div>
<div class="a t" style="left:294px;top:583px;"><svg class="g" width="12" height="13"><use href="#g72"/></svg><svg class="g" width="12" height="13"><use href="#g73"/></svg><svg class="g" width="12" height="13"><use href="#g39"/></svg><svg class="g" width="12" height="13"><use href="#g40"/></svg></div>
<div class="a" style="left:345px;top:580px;width:66px;height:17px;border-top:1px solid #a0a0a0;border-left:1px solid #a0a0a0;border-right:1px solid #fff;border-bottom:1px solid #fff"></div>
<div class="a t" style="left:348px;top:583px;">0.000s</div>
<div class="a t" style="left:415px;top:583px;"><svg class="g" width="12" height="13"><use href="#g41"/></svg><svg class="g" width="12" height="13"><use href="#g74"/></svg><svg class="g" width="12" height="13"><use href="#g46"/></svg>:(<svg class="g" width="12" height="13"><use href="#g75"/></svg>-<svg class="g" width="12" height="13"><use href="#g50"/></svg><svg class="g" width="12" height="13"><use href="#g51"/></svg><svg class="g" width="12" height="13"><use href="#g76"/></svg><svg class="g" width="12" height="13"><use href="#g77"/></svg>-<svg class="g" width="12" height="13"><use href="#g52"/></svg><svg class="g" width="12" height="13"><use href="#g53"/></svg>)</div>
<div class="a" style="left:571px;top:580px;width:226px;height:17px;border-top:1px solid #a0a0a0;border-left:1px solid #a0a0a0"></div>
<div class="a t" style="left:572px;top:584px;">A</div>
<div class="a" style="left:579.5px;top:582px;width:10.5px;height:11px;border-radius:50%;background:#808080"></div>
<div class="a t" style="left:594px;top:584px;">B</div>
<div class="a" style="left:601.5px;top:582px;width:10.5px;height:11px;border-radius:50%;background:#808080"></div>
<div class="a t" style="left:616px;top:584px;">C</div>
<div class="a" style="left:623.5px;top:582px;width:10.5px;height:11px;border-radius:50%;background:#808080"></div>
<div class="a t" style="left:638px;top:584px;">R</div>
<div class="a" style="left:645.5px;top:582px;width:10.5px;height:11px;border-radius:50%;background:#808080"></div>
<div class="a t" style="left:660px;top:584px;">a</div>
<div class="a" style="left:667.5px;top:582px;width:10.5px;height:11px;border-radius:50%;background:#808080"></div>
<div class="a t" style="left:682px;top:584px;">b</div>
<div class="a" style="left:689.5px;top:582px;width:10.5px;height:11px;border-radius:50%;background:#808080"></div>
<div class="a t" style="left:704px;top:584px;">c</div>
<div class="a" style="left:711.5px;top:582px;width:10.5px;height:11px;border-radius:50%;background:#808080"></div>
<div class="a t" style="left:726px;top:584px;">r</div>
<div class="a" style="left:733.5px;top:582px;width:10.5px;height:11px;border-radius:50%;background:#808080"></div>
<div class="a t" style="left:748px;top:584px;">E</div>
<div class="a" style="left:755.5px;top:582px;width:10.5px;height:11px;border-radius:50%;background:#808080"></div>
<div class="a t" style="left:770px;top:584px;">e</div>
<div class="a" style="left:777.5px;top:582px;width:10.5px;height:11px;border-radius:50%;background:#808080"></div>
</body></html>
